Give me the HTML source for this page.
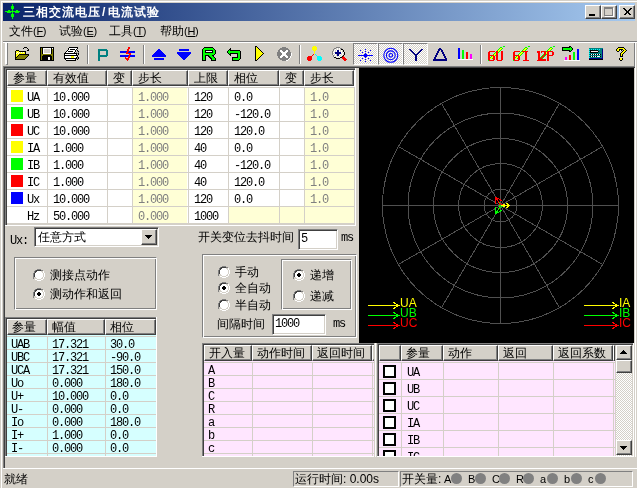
<!DOCTYPE html><html><head><meta charset="utf-8"><style>
*{margin:0;padding:0;box-sizing:border-box}
html,body{width:637px;height:488px;overflow:hidden}
body{background:#D4D0C8;position:relative;will-change:transform;font-family:"Liberation Sans",sans-serif;font-size:12px;color:#000}
.a{position:absolute}
.t{white-space:nowrap;font-size:12px;line-height:14px}
.m{white-space:nowrap;font-family:"Liberation Mono",monospace;font-size:12px;letter-spacing:-1.2px;line-height:14px}
svg{overflow:visible}
.mm{font-size:11px;letter-spacing:-0.3px}
</style></head><body>
<div class="a" style="left:1px;top:1px;width:636px;height:1px;background:#FFFFFF"></div>
<div class="a" style="left:1px;top:1px;width:1px;height:487px;background:#FFFFFF"></div>
<div class="a" style="left:3px;top:3px;width:632px;height:18px;background:linear-gradient(to right,#0A246A,#A6CAF0)"></div>
<svg class="a" style="left:2px;top:2px" width="18" height="17" viewBox="0 0 18 17" shape-rendering="crispEdges"><rect x="10" y="2" width="1" height="1" fill="#00FF00"/><rect x="10" y="3" width="1" height="1" fill="#00FF00"/><rect x="9" y="4" width="3" height="1" fill="#00FF00"/><rect x="9" y="5" width="3" height="1" fill="#00FF00"/><rect x="9" y="6" width="3" height="1" fill="#00FF00"/><rect x="10" y="7" width="1" height="1" fill="#00FF00"/><rect x="6" y="8" width="2" height="1" fill="#00FF00"/><rect x="10" y="8" width="1" height="1" fill="#00FF00"/><rect x="14" y="8" width="2" height="1" fill="#00FF00"/><rect x="3" y="9" width="15" height="1" fill="#00FF00"/><rect x="5" y="10" width="4" height="1" fill="#00FF00"/><rect x="10" y="10" width="1" height="1" fill="#00FF00"/><rect x="13" y="10" width="4" height="1" fill="#00FF00"/><rect x="10" y="11" width="1" height="1" fill="#00FF00"/><rect x="9" y="12" width="3" height="1" fill="#00FF00"/><rect x="9" y="13" width="3" height="1" fill="#00FF00"/><rect x="9" y="14" width="3" height="1" fill="#00FF00"/><rect x="10" y="15" width="1" height="1" fill="#00FF00"/><rect x="10" y="16" width="1" height="1" fill="#00FF00"/></svg>
<div class="a t" style="left:23px;top:5px;color:#fff;font-weight:bold;font-size:12px;line-height:14px;letter-spacing:1px">三相交流电压<span style="margin:0 2px 0 1px">/</span>电流试验</div>
<div class="a" style="left:585px;top:5px;width:16px;height:14px;background:#D4D0C8;border-top:1px solid #FFFFFF;border-left:1px solid #FFFFFF;border-right:1px solid #404040;border-bottom:1px solid #404040;box-shadow:inset -1px -1px 0 #808080"></div>
<div class="a" style="left:601px;top:5px;width:16px;height:14px;background:#D4D0C8;border-top:1px solid #FFFFFF;border-left:1px solid #FFFFFF;border-right:1px solid #404040;border-bottom:1px solid #404040;box-shadow:inset -1px -1px 0 #808080"></div>
<div class="a" style="left:619px;top:5px;width:16px;height:14px;background:#D4D0C8;border-top:1px solid #FFFFFF;border-left:1px solid #FFFFFF;border-right:1px solid #404040;border-bottom:1px solid #404040;box-shadow:inset -1px -1px 0 #808080"></div>
<div class="a" style="left:589px;top:14px;width:6px;height:2px;background:#000"></div>
<div class="a" style="left:604px;top:7px;width:9px;height:9px;border:1px solid #808080;border-top-width:2px;box-shadow:1px 1px 0 #FFFFFF"></div>
<svg class="a" style="left:619px;top:5px" width="16" height="14" viewBox="0 0 16 14"><path d="M4.5 3.5 L11.5 10.5 M5.5 3.5 L12.5 10.5 M11.5 3.5 L4.5 10.5 M12.5 3.5 L5.5 10.5" stroke="#000" stroke-width="1" shape-rendering="crispEdges"/></svg>
<div class="a t" style="left:9px;top:24px;font-size:12px;line-height:14px">文件<span class=mm>(<u>F</u>)</span></div>
<div class="a t" style="left:59px;top:24px;font-size:12px;line-height:14px">试验<span class=mm>(<u>E</u>)</span></div>
<div class="a t" style="left:109px;top:24px;font-size:12px;line-height:14px">工具<span class=mm>(<u>T</u>)</span></div>
<div class="a t" style="left:160px;top:24px;font-size:12px;line-height:14px">帮助<span class=mm>(<u>H</u>)</span></div>
<div class="a" style="left:3px;top:41px;width:634px;height:1px;background:#808080"></div>
<div class="a" style="left:3px;top:42px;width:634px;height:1px;background:#FFFFFF"></div>
<div class="a" style="left:5px;top:43px;width:3px;height:22px;border-left:2px solid #FFFFFF;border-right:1px solid #808080;border-bottom:1px solid #808080"></div>
<div class="a" style="left:87px;top:45px;width:1px;height:19px;background:#808080"></div>
<div class="a" style="left:88px;top:45px;width:1px;height:19px;background:#FFFFFF"></div>
<div class="a" style="left:143px;top:45px;width:1px;height:19px;background:#808080"></div>
<div class="a" style="left:144px;top:45px;width:1px;height:19px;background:#FFFFFF"></div>
<div class="a" style="left:299px;top:45px;width:1px;height:19px;background:#808080"></div>
<div class="a" style="left:300px;top:45px;width:1px;height:19px;background:#FFFFFF"></div>
<div class="a" style="left:480px;top:45px;width:1px;height:19px;background:#808080"></div>
<div class="a" style="left:481px;top:45px;width:1px;height:19px;background:#FFFFFF"></div>
<div class="a" style="left:353px;top:43px;width:25px;height:22px;border-top:1px solid #808080;border-left:1px solid #808080;border-right:1px solid #FFFFFF;border-bottom:1px solid #FFFFFF;background-color:#FFFFFF;background-image:repeating-conic-gradient(#D4D0C8 0 25%, #FFFFFF 0 50%);background-size:2px 2px"></div>
<div class="a" style="left:378px;top:43px;width:25px;height:22px;border-top:1px solid #808080;border-left:1px solid #808080;border-right:1px solid #FFFFFF;border-bottom:1px solid #FFFFFF;background-color:#FFFFFF;background-image:repeating-conic-gradient(#D4D0C8 0 25%, #FFFFFF 0 50%);background-size:2px 2px"></div>
<div class="a" style="left:403px;top:43px;width:25px;height:22px;border-top:1px solid #808080;border-left:1px solid #808080;border-right:1px solid #FFFFFF;border-bottom:1px solid #FFFFFF;background-color:#FFFFFF;background-image:repeating-conic-gradient(#D4D0C8 0 25%, #FFFFFF 0 50%);background-size:2px 2px"></div>
<div class="a" style="left:634px;top:43px;width:1px;height:23px;background:#808080"></div>
<div class="a" style="left:635px;top:43px;width:1px;height:23px;background:#FFFFFF"></div>
<svg class="a" style="left:13px;top:45px" width="16" height="15" viewBox="0 0 16 15" shape-rendering="crispEdges"><rect x="11" y="2" width="3" height="1" fill="#000000"/><rect x="10" y="3" width="1" height="1" fill="#000000"/><rect x="14" y="3" width="1" height="1" fill="#000000"/><rect x="15" y="4" width="1" height="1" fill="#000000"/><rect x="3" y="5" width="3" height="1" fill="#000000"/><rect x="14" y="5" width="2" height="1" fill="#000000"/><rect x="2" y="6" width="1" height="1" fill="#000000"/><rect x="3" y="6" width="3" height="1" fill="#FFFF00"/><rect x="6" y="6" width="7" height="1" fill="#000000"/><rect x="2" y="7" width="1" height="1" fill="#000000"/><rect x="3" y="7" width="1" height="1" fill="#FFFF00"/><rect x="4" y="7" width="1" height="1" fill="#FFFFFF"/><rect x="5" y="7" width="1" height="1" fill="#FFFF00"/><rect x="6" y="7" width="1" height="1" fill="#FFFFFF"/><rect x="7" y="7" width="1" height="1" fill="#FFFF00"/><rect x="8" y="7" width="1" height="1" fill="#FFFFFF"/><rect x="9" y="7" width="1" height="1" fill="#FFFF00"/><rect x="10" y="7" width="1" height="1" fill="#FFFFFF"/><rect x="11" y="7" width="1" height="1" fill="#FFFF00"/><rect x="12" y="7" width="1" height="1" fill="#000000"/><rect x="2" y="8" width="1" height="1" fill="#000000"/><rect x="3" y="8" width="1" height="1" fill="#FFFFFF"/><rect x="4" y="8" width="1" height="1" fill="#FFFF00"/><rect x="5" y="8" width="1" height="1" fill="#FFFFFF"/><rect x="6" y="8" width="6" height="1" fill="#FFFF00"/><rect x="12" y="8" width="1" height="1" fill="#000000"/><rect x="2" y="9" width="1" height="1" fill="#000000"/><rect x="3" y="9" width="3" height="1" fill="#FFFF00"/><rect x="6" y="9" width="10" height="1" fill="#000000"/><rect x="2" y="10" width="1" height="1" fill="#000000"/><rect x="3" y="10" width="2" height="1" fill="#FFFF00"/><rect x="5" y="10" width="1" height="1" fill="#000000"/><rect x="6" y="10" width="9" height="1" fill="#808000"/><rect x="15" y="10" width="1" height="1" fill="#000000"/><rect x="2" y="11" width="1" height="1" fill="#000000"/><rect x="3" y="11" width="1" height="1" fill="#FFFF00"/><rect x="4" y="11" width="1" height="1" fill="#000000"/><rect x="5" y="11" width="9" height="1" fill="#808000"/><rect x="14" y="11" width="1" height="1" fill="#000000"/><rect x="2" y="12" width="2" height="1" fill="#000000"/><rect x="4" y="12" width="9" height="1" fill="#808000"/><rect x="13" y="12" width="1" height="1" fill="#000000"/><rect x="2" y="13" width="1" height="1" fill="#000000"/><rect x="3" y="13" width="9" height="1" fill="#808000"/><rect x="12" y="13" width="1" height="1" fill="#000000"/><rect x="2" y="14" width="10" height="1" fill="#000000"/></svg>
<svg class="a" style="left:38px;top:45px" width="16" height="16" viewBox="0 0 16 16" shape-rendering="crispEdges"><rect x="2" y="2" width="14" height="1" fill="#000000"/><rect x="2" y="3" width="1" height="1" fill="#000000"/><rect x="3" y="3" width="1" height="1" fill="#808000"/><rect x="4" y="3" width="1" height="1" fill="#000000"/><rect x="5" y="3" width="8" height="1" fill="#FFFFFF"/><rect x="13" y="3" width="1" height="1" fill="#000000"/><rect x="14" y="3" width="1" height="1" fill="#FFFFFF"/><rect x="15" y="3" width="1" height="1" fill="#000000"/><rect x="2" y="4" width="1" height="1" fill="#000000"/><rect x="3" y="4" width="1" height="1" fill="#808000"/><rect x="4" y="4" width="1" height="1" fill="#000000"/><rect x="5" y="4" width="1" height="1" fill="#FFFFFF"/><rect x="6" y="4" width="6" height="1" fill="#D4D0C8"/><rect x="12" y="4" width="1" height="1" fill="#FFFFFF"/><rect x="13" y="4" width="1" height="1" fill="#000000"/><rect x="14" y="4" width="1" height="1" fill="#808000"/><rect x="15" y="4" width="1" height="1" fill="#000000"/><rect x="2" y="5" width="1" height="1" fill="#000000"/><rect x="3" y="5" width="1" height="1" fill="#808000"/><rect x="4" y="5" width="1" height="1" fill="#000000"/><rect x="5" y="5" width="1" height="1" fill="#FFFFFF"/><rect x="6" y="5" width="6" height="1" fill="#D4D0C8"/><rect x="12" y="5" width="1" height="1" fill="#FFFFFF"/><rect x="13" y="5" width="1" height="1" fill="#000000"/><rect x="14" y="5" width="1" height="1" fill="#808000"/><rect x="15" y="5" width="1" height="1" fill="#000000"/><rect x="2" y="6" width="1" height="1" fill="#000000"/><rect x="3" y="6" width="1" height="1" fill="#808000"/><rect x="4" y="6" width="1" height="1" fill="#000000"/><rect x="5" y="6" width="1" height="1" fill="#FFFFFF"/><rect x="6" y="6" width="6" height="1" fill="#D4D0C8"/><rect x="12" y="6" width="1" height="1" fill="#FFFFFF"/><rect x="13" y="6" width="1" height="1" fill="#000000"/><rect x="14" y="6" width="1" height="1" fill="#808000"/><rect x="15" y="6" width="1" height="1" fill="#000000"/><rect x="2" y="7" width="1" height="1" fill="#000000"/><rect x="3" y="7" width="1" height="1" fill="#808000"/><rect x="4" y="7" width="1" height="1" fill="#000000"/><rect x="5" y="7" width="1" height="1" fill="#FFFFFF"/><rect x="6" y="7" width="6" height="1" fill="#D4D0C8"/><rect x="12" y="7" width="1" height="1" fill="#FFFFFF"/><rect x="13" y="7" width="1" height="1" fill="#000000"/><rect x="14" y="7" width="1" height="1" fill="#808000"/><rect x="15" y="7" width="1" height="1" fill="#000000"/><rect x="2" y="8" width="1" height="1" fill="#000000"/><rect x="3" y="8" width="1" height="1" fill="#808000"/><rect x="4" y="8" width="1" height="1" fill="#000000"/><rect x="5" y="8" width="8" height="1" fill="#FFFFFF"/><rect x="13" y="8" width="1" height="1" fill="#000000"/><rect x="14" y="8" width="1" height="1" fill="#808000"/><rect x="15" y="8" width="1" height="1" fill="#000000"/><rect x="2" y="9" width="1" height="1" fill="#000000"/><rect x="3" y="9" width="12" height="1" fill="#808000"/><rect x="15" y="9" width="1" height="1" fill="#000000"/><rect x="2" y="10" width="1" height="1" fill="#000000"/><rect x="3" y="10" width="2" height="1" fill="#808000"/><rect x="5" y="10" width="8" height="1" fill="#000000"/><rect x="13" y="10" width="2" height="1" fill="#808000"/><rect x="15" y="10" width="1" height="1" fill="#000000"/><rect x="2" y="11" width="1" height="1" fill="#000000"/><rect x="3" y="11" width="1" height="1" fill="#808000"/><rect x="4" y="11" width="10" height="1" fill="#000000"/><rect x="14" y="11" width="1" height="1" fill="#808000"/><rect x="15" y="11" width="1" height="1" fill="#000000"/><rect x="2" y="12" width="1" height="1" fill="#000000"/><rect x="3" y="12" width="1" height="1" fill="#808000"/><rect x="4" y="12" width="6" height="1" fill="#000000"/><rect x="10" y="12" width="2" height="1" fill="#FFFFFF"/><rect x="12" y="12" width="2" height="1" fill="#000000"/><rect x="14" y="12" width="1" height="1" fill="#808000"/><rect x="15" y="12" width="1" height="1" fill="#000000"/><rect x="2" y="13" width="1" height="1" fill="#000000"/><rect x="3" y="13" width="1" height="1" fill="#808000"/><rect x="4" y="13" width="6" height="1" fill="#000000"/><rect x="10" y="13" width="2" height="1" fill="#FFFFFF"/><rect x="12" y="13" width="2" height="1" fill="#000000"/><rect x="14" y="13" width="1" height="1" fill="#808000"/><rect x="15" y="13" width="1" height="1" fill="#000000"/><rect x="2" y="14" width="1" height="1" fill="#000000"/><rect x="3" y="14" width="1" height="1" fill="#808000"/><rect x="4" y="14" width="6" height="1" fill="#000000"/><rect x="10" y="14" width="2" height="1" fill="#FFFFFF"/><rect x="12" y="14" width="2" height="1" fill="#000000"/><rect x="14" y="14" width="1" height="1" fill="#808000"/><rect x="15" y="14" width="1" height="1" fill="#000000"/><rect x="2" y="15" width="14" height="1" fill="#000000"/></svg>
<svg class="a" style="left:62px;top:45px" width="17" height="16" viewBox="0 0 17 16" shape-rendering="crispEdges"><rect x="7" y="2" width="9" height="1" fill="#000000"/><rect x="6" y="3" width="1" height="1" fill="#000000"/><rect x="7" y="3" width="8" height="1" fill="#FFFFFF"/><rect x="15" y="3" width="1" height="1" fill="#000000"/><rect x="6" y="4" width="1" height="1" fill="#000000"/><rect x="7" y="4" width="1" height="1" fill="#FFFFFF"/><rect x="8" y="4" width="5" height="1" fill="#000000"/><rect x="13" y="4" width="1" height="1" fill="#FFFFFF"/><rect x="14" y="4" width="1" height="1" fill="#000000"/><rect x="5" y="5" width="1" height="1" fill="#000000"/><rect x="6" y="5" width="7" height="1" fill="#FFFFFF"/><rect x="13" y="5" width="1" height="1" fill="#000000"/><rect x="15" y="5" width="1" height="1" fill="#000000"/><rect x="4" y="6" width="1" height="1" fill="#000000"/><rect x="5" y="6" width="1" height="1" fill="#FFFFFF"/><rect x="6" y="6" width="5" height="1" fill="#000000"/><rect x="11" y="6" width="2" height="1" fill="#FFFFFF"/><rect x="13" y="6" width="1" height="1" fill="#000000"/><rect x="15" y="6" width="1" height="1" fill="#808080"/><rect x="16" y="6" width="1" height="1" fill="#000000"/><rect x="3" y="7" width="1" height="1" fill="#000000"/><rect x="4" y="7" width="8" height="1" fill="#FFFFFF"/><rect x="12" y="7" width="1" height="1" fill="#000000"/><rect x="14" y="7" width="1" height="1" fill="#808080"/><rect x="16" y="7" width="1" height="1" fill="#808080"/><rect x="2" y="8" width="13" height="1" fill="#000000"/><rect x="15" y="8" width="1" height="1" fill="#808080"/><rect x="16" y="8" width="1" height="1" fill="#000000"/><rect x="2" y="9" width="1" height="1" fill="#000000"/><rect x="3" y="9" width="11" height="1" fill="#FFFFFF"/><rect x="14" y="9" width="1" height="1" fill="#000000"/><rect x="16" y="9" width="1" height="1" fill="#000000"/><rect x="2" y="10" width="14" height="1" fill="#000000"/><rect x="2" y="11" width="1" height="1" fill="#000000"/><rect x="3" y="11" width="6" height="1" fill="#FFFFFF"/><rect x="9" y="11" width="3" height="1" fill="#FFFF00"/><rect x="12" y="11" width="3" height="1" fill="#FFFFFF"/><rect x="15" y="11" width="1" height="1" fill="#000000"/><rect x="2" y="12" width="1" height="1" fill="#000000"/><rect x="3" y="12" width="6" height="1" fill="#FFFFFF"/><rect x="9" y="12" width="3" height="1" fill="#FFFF00"/><rect x="12" y="12" width="2" height="1" fill="#FFFFFF"/><rect x="14" y="12" width="1" height="1" fill="#000000"/><rect x="15" y="12" width="1" height="1" fill="#808080"/><rect x="16" y="12" width="1" height="1" fill="#000000"/><rect x="2" y="13" width="13" height="1" fill="#000000"/><rect x="15" y="13" width="1" height="1" fill="#808080"/><rect x="16" y="13" width="1" height="1" fill="#000000"/><rect x="3" y="14" width="1" height="1" fill="#000000"/><rect x="4" y="14" width="9" height="1" fill="#FFFFFF"/><rect x="13" y="14" width="1" height="1" fill="#000000"/><rect x="15" y="14" width="1" height="1" fill="#000000"/><rect x="4" y="15" width="10" height="1" fill="#000000"/></svg>
<svg class="a" style="left:94px;top:45px" width="14" height="16" viewBox="0 0 14 16" shape-rendering="crispEdges"><rect x="4" y="4" width="9" height="1" fill="#008080"/><rect x="4" y="5" width="10" height="1" fill="#008080"/><rect x="4" y="6" width="2" height="1" fill="#008080"/><rect x="12" y="6" width="2" height="1" fill="#008080"/><rect x="4" y="7" width="2" height="1" fill="#008080"/><rect x="12" y="7" width="2" height="1" fill="#008080"/><rect x="4" y="8" width="2" height="1" fill="#008080"/><rect x="12" y="8" width="2" height="1" fill="#008080"/><rect x="4" y="9" width="2" height="1" fill="#008080"/><rect x="12" y="9" width="2" height="1" fill="#008080"/><rect x="4" y="10" width="10" height="1" fill="#008080"/><rect x="4" y="11" width="9" height="1" fill="#008080"/><rect x="4" y="12" width="2" height="1" fill="#008080"/><rect x="4" y="13" width="2" height="1" fill="#008080"/><rect x="4" y="14" width="2" height="1" fill="#008080"/><rect x="4" y="15" width="2" height="1" fill="#008080"/></svg>
<svg class="a" style="left:118px;top:45px" width="17" height="16" viewBox="0 0 17 16" shape-rendering="crispEdges"><rect x="10" y="2" width="2" height="1" fill="#FF0000"/><rect x="10" y="3" width="2" height="1" fill="#FF0000"/><rect x="9" y="4" width="2" height="1" fill="#FF0000"/><rect x="9" y="5" width="2" height="1" fill="#FF0000"/><rect x="2" y="6" width="7" height="1" fill="#0000FF"/><rect x="9" y="6" width="2" height="1" fill="#FF0000"/><rect x="11" y="6" width="6" height="1" fill="#0000FF"/><rect x="2" y="7" width="6" height="1" fill="#0000FF"/><rect x="8" y="7" width="2" height="1" fill="#FF0000"/><rect x="10" y="7" width="7" height="1" fill="#0000FF"/><rect x="8" y="8" width="5" height="1" fill="#FF0000"/><rect x="11" y="9" width="2" height="1" fill="#FF0000"/><rect x="2" y="10" width="9" height="1" fill="#0000FF"/><rect x="11" y="10" width="1" height="1" fill="#FF0000"/><rect x="12" y="10" width="5" height="1" fill="#0000FF"/><rect x="2" y="11" width="8" height="1" fill="#0000FF"/><rect x="10" y="11" width="2" height="1" fill="#FF0000"/><rect x="12" y="11" width="5" height="1" fill="#0000FF"/><rect x="7" y="12" width="1" height="1" fill="#FF0000"/><rect x="10" y="12" width="2" height="1" fill="#FF0000"/><rect x="7" y="13" width="4" height="1" fill="#FF0000"/><rect x="8" y="14" width="3" height="1" fill="#FF0000"/><rect x="9" y="15" width="1" height="1" fill="#FF0000"/></svg>
<svg class="a" style="left:149px;top:45px" width="17" height="15" viewBox="0 0 17 15" shape-rendering="crispEdges"><rect x="9" y="4" width="2" height="1" fill="#0000FF"/><rect x="8" y="5" width="4" height="1" fill="#0000FF"/><rect x="7" y="6" width="6" height="1" fill="#0000FF"/><rect x="6" y="7" width="8" height="1" fill="#0000FF"/><rect x="5" y="8" width="10" height="1" fill="#0000FF"/><rect x="4" y="9" width="12" height="1" fill="#0000FF"/><rect x="3" y="10" width="14" height="1" fill="#0000FF"/><rect x="3" y="11" width="14" height="1" fill="#0000FF"/><rect x="5" y="13" width="10" height="1" fill="#0000FF"/><rect x="5" y="14" width="10" height="1" fill="#0000FF"/></svg>
<svg class="a" style="left:174px;top:45px" width="17" height="15" viewBox="0 0 17 15" shape-rendering="crispEdges"><rect x="5" y="4" width="10" height="1" fill="#0000FF"/><rect x="5" y="5" width="10" height="1" fill="#0000FF"/><rect x="3" y="7" width="14" height="1" fill="#0000FF"/><rect x="3" y="8" width="14" height="1" fill="#0000FF"/><rect x="4" y="9" width="12" height="1" fill="#0000FF"/><rect x="5" y="10" width="10" height="1" fill="#0000FF"/><rect x="6" y="11" width="8" height="1" fill="#0000FF"/><rect x="7" y="12" width="6" height="1" fill="#0000FF"/><rect x="8" y="13" width="4" height="1" fill="#0000FF"/><rect x="9" y="14" width="2" height="1" fill="#0000FF"/></svg>
<svg class="a" style="left:199px;top:45px" width="17" height="16" viewBox="0 0 17 16" shape-rendering="crispEdges"><rect x="5" y="2" width="9" height="1" fill="#000000"/><rect x="4" y="3" width="1" height="1" fill="#000000"/><rect x="5" y="3" width="9" height="1" fill="#00FF00"/><rect x="14" y="3" width="1" height="1" fill="#000000"/><rect x="3" y="4" width="1" height="1" fill="#000000"/><rect x="4" y="4" width="11" height="1" fill="#00FF00"/><rect x="15" y="4" width="1" height="1" fill="#000000"/><rect x="3" y="5" width="1" height="1" fill="#000000"/><rect x="4" y="5" width="2" height="1" fill="#00FF00"/><rect x="6" y="5" width="8" height="1" fill="#000000"/><rect x="14" y="5" width="2" height="1" fill="#00FF00"/><rect x="16" y="5" width="1" height="1" fill="#000000"/><rect x="3" y="6" width="1" height="1" fill="#000000"/><rect x="4" y="6" width="2" height="1" fill="#00FF00"/><rect x="6" y="6" width="1" height="1" fill="#000000"/><rect x="7" y="6" width="6" height="1" fill="#FFFFFF"/><rect x="13" y="6" width="1" height="1" fill="#000000"/><rect x="14" y="6" width="2" height="1" fill="#00FF00"/><rect x="16" y="6" width="1" height="1" fill="#000000"/><rect x="3" y="7" width="1" height="1" fill="#000000"/><rect x="4" y="7" width="2" height="1" fill="#00FF00"/><rect x="6" y="7" width="8" height="1" fill="#000000"/><rect x="14" y="7" width="2" height="1" fill="#00FF00"/><rect x="16" y="7" width="1" height="1" fill="#000000"/><rect x="3" y="8" width="1" height="1" fill="#000000"/><rect x="4" y="8" width="12" height="1" fill="#00FF00"/><rect x="16" y="8" width="1" height="1" fill="#000000"/><rect x="3" y="9" width="1" height="1" fill="#000000"/><rect x="4" y="9" width="11" height="1" fill="#00FF00"/><rect x="15" y="9" width="1" height="1" fill="#000000"/><rect x="3" y="10" width="1" height="1" fill="#000000"/><rect x="4" y="10" width="2" height="1" fill="#00FF00"/><rect x="6" y="10" width="4" height="1" fill="#000000"/><rect x="10" y="10" width="3" height="1" fill="#00FF00"/><rect x="13" y="10" width="2" height="1" fill="#000000"/><rect x="3" y="11" width="1" height="1" fill="#000000"/><rect x="4" y="11" width="2" height="1" fill="#00FF00"/><rect x="6" y="11" width="1" height="1" fill="#000000"/><rect x="9" y="11" width="2" height="1" fill="#000000"/><rect x="11" y="11" width="3" height="1" fill="#00FF00"/><rect x="14" y="11" width="1" height="1" fill="#000000"/><rect x="3" y="12" width="1" height="1" fill="#000000"/><rect x="4" y="12" width="2" height="1" fill="#00FF00"/><rect x="6" y="12" width="1" height="1" fill="#000000"/><rect x="10" y="12" width="2" height="1" fill="#000000"/><rect x="12" y="12" width="3" height="1" fill="#00FF00"/><rect x="15" y="12" width="1" height="1" fill="#000000"/><rect x="3" y="13" width="1" height="1" fill="#000000"/><rect x="4" y="13" width="2" height="1" fill="#00FF00"/><rect x="6" y="13" width="1" height="1" fill="#000000"/><rect x="11" y="13" width="2" height="1" fill="#000000"/><rect x="13" y="13" width="3" height="1" fill="#00FF00"/><rect x="16" y="13" width="1" height="1" fill="#000000"/><rect x="3" y="14" width="1" height="1" fill="#000000"/><rect x="4" y="14" width="2" height="1" fill="#00FF00"/><rect x="6" y="14" width="1" height="1" fill="#000000"/><rect x="12" y="14" width="1" height="1" fill="#000000"/><rect x="13" y="14" width="3" height="1" fill="#00FF00"/><rect x="16" y="14" width="1" height="1" fill="#000000"/><rect x="3" y="15" width="4" height="1" fill="#000000"/><rect x="12" y="15" width="5" height="1" fill="#000000"/></svg>
<svg class="a" style="left:224px;top:45px" width="17" height="16" viewBox="0 0 17 16" shape-rendering="crispEdges"><rect x="6" y="3" width="1" height="1" fill="#000000"/><rect x="5" y="4" width="2" height="1" fill="#000000"/><rect x="4" y="5" width="1" height="1" fill="#000000"/><rect x="5" y="5" width="1" height="1" fill="#00FF00"/><rect x="6" y="5" width="10" height="1" fill="#000000"/><rect x="3" y="6" width="1" height="1" fill="#000000"/><rect x="4" y="6" width="12" height="1" fill="#00FF00"/><rect x="16" y="6" width="1" height="1" fill="#000000"/><rect x="3" y="7" width="1" height="1" fill="#000000"/><rect x="4" y="7" width="12" height="1" fill="#00FF00"/><rect x="16" y="7" width="1" height="1" fill="#000000"/><rect x="4" y="8" width="1" height="1" fill="#000000"/><rect x="5" y="8" width="1" height="1" fill="#00FF00"/><rect x="6" y="8" width="8" height="1" fill="#000000"/><rect x="14" y="8" width="2" height="1" fill="#00FF00"/><rect x="16" y="8" width="1" height="1" fill="#000000"/><rect x="5" y="9" width="2" height="1" fill="#000000"/><rect x="13" y="9" width="1" height="1" fill="#000000"/><rect x="14" y="9" width="2" height="1" fill="#00FF00"/><rect x="16" y="9" width="1" height="1" fill="#000000"/><rect x="6" y="10" width="1" height="1" fill="#000000"/><rect x="13" y="10" width="1" height="1" fill="#000000"/><rect x="14" y="10" width="2" height="1" fill="#00FF00"/><rect x="16" y="10" width="1" height="1" fill="#000000"/><rect x="13" y="11" width="1" height="1" fill="#000000"/><rect x="14" y="11" width="2" height="1" fill="#00FF00"/><rect x="16" y="11" width="1" height="1" fill="#000000"/><rect x="8" y="12" width="6" height="1" fill="#000000"/><rect x="14" y="12" width="2" height="1" fill="#00FF00"/><rect x="16" y="12" width="1" height="1" fill="#000000"/><rect x="8" y="13" width="1" height="1" fill="#000000"/><rect x="9" y="13" width="7" height="1" fill="#00FF00"/><rect x="16" y="13" width="1" height="1" fill="#000000"/><rect x="8" y="14" width="1" height="1" fill="#000000"/><rect x="9" y="14" width="6" height="1" fill="#00FF00"/><rect x="15" y="14" width="1" height="1" fill="#000000"/><rect x="8" y="15" width="7" height="1" fill="#000000"/></svg>
<svg class="a" style="left:249px;top:45px" width="15" height="16" viewBox="0 0 15 16" shape-rendering="crispEdges"><rect x="6" y="1" width="2" height="1" fill="#000000"/><rect x="6" y="2" width="1" height="1" fill="#000000"/><rect x="7" y="2" width="1" height="1" fill="#FFFF00"/><rect x="8" y="2" width="1" height="1" fill="#000000"/><rect x="6" y="3" width="1" height="1" fill="#000000"/><rect x="7" y="3" width="2" height="1" fill="#FFFF00"/><rect x="9" y="3" width="1" height="1" fill="#000000"/><rect x="6" y="4" width="1" height="1" fill="#000000"/><rect x="7" y="4" width="3" height="1" fill="#FFFF00"/><rect x="10" y="4" width="1" height="1" fill="#000000"/><rect x="6" y="5" width="1" height="1" fill="#000000"/><rect x="7" y="5" width="4" height="1" fill="#FFFF00"/><rect x="11" y="5" width="1" height="1" fill="#000000"/><rect x="6" y="6" width="1" height="1" fill="#000000"/><rect x="7" y="6" width="5" height="1" fill="#FFFF00"/><rect x="12" y="6" width="1" height="1" fill="#000000"/><rect x="6" y="7" width="1" height="1" fill="#000000"/><rect x="7" y="7" width="6" height="1" fill="#FFFF00"/><rect x="13" y="7" width="1" height="1" fill="#000000"/><rect x="6" y="8" width="1" height="1" fill="#000000"/><rect x="7" y="8" width="7" height="1" fill="#FFFF00"/><rect x="14" y="8" width="1" height="1" fill="#000000"/><rect x="6" y="9" width="1" height="1" fill="#000000"/><rect x="7" y="9" width="6" height="1" fill="#FFFF00"/><rect x="13" y="9" width="1" height="1" fill="#000000"/><rect x="6" y="10" width="1" height="1" fill="#000000"/><rect x="7" y="10" width="5" height="1" fill="#FFFF00"/><rect x="12" y="10" width="1" height="1" fill="#000000"/><rect x="6" y="11" width="1" height="1" fill="#000000"/><rect x="7" y="11" width="4" height="1" fill="#FFFF00"/><rect x="11" y="11" width="1" height="1" fill="#000000"/><rect x="6" y="12" width="1" height="1" fill="#000000"/><rect x="7" y="12" width="3" height="1" fill="#FFFF00"/><rect x="10" y="12" width="1" height="1" fill="#000000"/><rect x="6" y="13" width="1" height="1" fill="#000000"/><rect x="7" y="13" width="2" height="1" fill="#FFFF00"/><rect x="9" y="13" width="1" height="1" fill="#000000"/><rect x="6" y="14" width="1" height="1" fill="#000000"/><rect x="7" y="14" width="1" height="1" fill="#FFFF00"/><rect x="8" y="14" width="1" height="1" fill="#000000"/><rect x="6" y="15" width="2" height="1" fill="#000000"/></svg>
<svg class="a" style="left:274px;top:45px" width="18" height="16" viewBox="0 0 18 16" shape-rendering="crispEdges"><rect x="8" y="2" width="4" height="1" fill="#808080"/><rect x="6" y="3" width="8" height="1" fill="#808080"/><rect x="5" y="4" width="10" height="1" fill="#808080"/><rect x="4" y="5" width="2" height="1" fill="#808080"/><rect x="6" y="5" width="2" height="1" fill="#FFFFFF"/><rect x="8" y="5" width="4" height="1" fill="#808080"/><rect x="12" y="5" width="2" height="1" fill="#FFFFFF"/><rect x="14" y="5" width="2" height="1" fill="#808080"/><rect x="4" y="6" width="2" height="1" fill="#808080"/><rect x="6" y="6" width="3" height="1" fill="#FFFFFF"/><rect x="9" y="6" width="2" height="1" fill="#808080"/><rect x="11" y="6" width="3" height="1" fill="#FFFFFF"/><rect x="14" y="6" width="2" height="1" fill="#808080"/><rect x="3" y="7" width="4" height="1" fill="#808080"/><rect x="7" y="7" width="6" height="1" fill="#FFFFFF"/><rect x="13" y="7" width="4" height="1" fill="#808080"/><rect x="3" y="8" width="5" height="1" fill="#808080"/><rect x="8" y="8" width="4" height="1" fill="#FFFFFF"/><rect x="12" y="8" width="5" height="1" fill="#808080"/><rect x="17" y="8" width="1" height="1" fill="#FFFFFF"/><rect x="3" y="9" width="5" height="1" fill="#808080"/><rect x="8" y="9" width="4" height="1" fill="#FFFFFF"/><rect x="12" y="9" width="5" height="1" fill="#808080"/><rect x="17" y="9" width="1" height="1" fill="#FFFFFF"/><rect x="3" y="10" width="4" height="1" fill="#808080"/><rect x="7" y="10" width="6" height="1" fill="#FFFFFF"/><rect x="13" y="10" width="4" height="1" fill="#808080"/><rect x="17" y="10" width="1" height="1" fill="#FFFFFF"/><rect x="4" y="11" width="2" height="1" fill="#808080"/><rect x="6" y="11" width="3" height="1" fill="#FFFFFF"/><rect x="9" y="11" width="2" height="1" fill="#808080"/><rect x="11" y="11" width="3" height="1" fill="#FFFFFF"/><rect x="14" y="11" width="2" height="1" fill="#808080"/><rect x="16" y="11" width="1" height="1" fill="#FFFFFF"/><rect x="4" y="12" width="2" height="1" fill="#808080"/><rect x="6" y="12" width="2" height="1" fill="#FFFFFF"/><rect x="8" y="12" width="4" height="1" fill="#808080"/><rect x="12" y="12" width="2" height="1" fill="#FFFFFF"/><rect x="14" y="12" width="2" height="1" fill="#808080"/><rect x="16" y="12" width="1" height="1" fill="#FFFFFF"/><rect x="5" y="13" width="10" height="1" fill="#808080"/><rect x="15" y="13" width="1" height="1" fill="#FFFFFF"/><rect x="6" y="14" width="8" height="1" fill="#808080"/><rect x="14" y="14" width="1" height="1" fill="#FFFFFF"/><rect x="8" y="15" width="4" height="1" fill="#808080"/><rect x="12" y="15" width="2" height="1" fill="#FFFFFF"/></svg>
<svg class="a" style="left:305px;top:45px" width="17" height="16" viewBox="0 0 17 16" shape-rendering="crispEdges"><rect x="8" y="1" width="3" height="1" fill="#FFFF00"/><rect x="7" y="2" width="5" height="1" fill="#FFFF00"/><rect x="7" y="3" width="5" height="1" fill="#FFFF00"/><rect x="7" y="4" width="5" height="1" fill="#FFFF00"/><rect x="8" y="5" width="3" height="1" fill="#FFFF00"/><rect x="9" y="6" width="1" height="1" fill="#FFFF00"/><rect x="9" y="7" width="1" height="1" fill="#FFFF00"/><rect x="9" y="8" width="1" height="1" fill="#FFFF00"/><rect x="8" y="9" width="1" height="1" fill="#FF0000"/><rect x="10" y="9" width="1" height="1" fill="#00FFFF"/><rect x="7" y="10" width="1" height="1" fill="#FF0000"/><rect x="11" y="10" width="1" height="1" fill="#00FFFF"/><rect x="3" y="11" width="4" height="1" fill="#FF0000"/><rect x="12" y="11" width="4" height="1" fill="#00FFFF"/><rect x="2" y="12" width="5" height="1" fill="#FF0000"/><rect x="12" y="12" width="5" height="1" fill="#00FFFF"/><rect x="2" y="13" width="5" height="1" fill="#FF0000"/><rect x="12" y="13" width="5" height="1" fill="#00FFFF"/><rect x="2" y="14" width="5" height="1" fill="#FF0000"/><rect x="12" y="14" width="5" height="1" fill="#00FFFF"/><rect x="3" y="15" width="3" height="1" fill="#FF0000"/><rect x="13" y="15" width="3" height="1" fill="#00FFFF"/></svg>
<svg class="a" style="left:330px;top:45px" width="17" height="16" viewBox="0 0 17 16" shape-rendering="crispEdges"><rect x="6" y="2" width="4" height="1" fill="#808080"/><rect x="4" y="3" width="2" height="1" fill="#808080"/><rect x="7" y="3" width="1" height="1" fill="#FFFFFF"/><rect x="9" y="3" width="1" height="1" fill="#FFFFFF"/><rect x="10" y="3" width="2" height="1" fill="#808080"/><rect x="3" y="4" width="1" height="1" fill="#808080"/><rect x="5" y="4" width="1" height="1" fill="#FFFFFF"/><rect x="7" y="4" width="1" height="1" fill="#FFFFFF"/><rect x="9" y="4" width="1" height="1" fill="#FFFFFF"/><rect x="11" y="4" width="2" height="1" fill="#000000"/><rect x="3" y="5" width="1" height="1" fill="#808080"/><rect x="4" y="5" width="1" height="1" fill="#FFFFFF"/><rect x="6" y="5" width="1" height="1" fill="#FFFFFF"/><rect x="7" y="5" width="2" height="1" fill="#000080"/><rect x="9" y="5" width="1" height="1" fill="#FFFFFF"/><rect x="11" y="5" width="1" height="1" fill="#FFFFFF"/><rect x="13" y="5" width="1" height="1" fill="#000000"/><rect x="2" y="6" width="1" height="1" fill="#808080"/><rect x="4" y="6" width="1" height="1" fill="#FFFFFF"/><rect x="6" y="6" width="1" height="1" fill="#FFFFFF"/><rect x="7" y="6" width="2" height="1" fill="#000080"/><rect x="9" y="6" width="1" height="1" fill="#FFFFFF"/><rect x="11" y="6" width="1" height="1" fill="#FFFFFF"/><rect x="13" y="6" width="1" height="1" fill="#000000"/><rect x="2" y="7" width="1" height="1" fill="#808080"/><rect x="3" y="7" width="1" height="1" fill="#FFFFFF"/><rect x="5" y="7" width="6" height="1" fill="#000080"/><rect x="11" y="7" width="1" height="1" fill="#FFFFFF"/><rect x="13" y="7" width="1" height="1" fill="#FFFFFF"/><rect x="14" y="7" width="1" height="1" fill="#000000"/><rect x="2" y="8" width="1" height="1" fill="#808080"/><rect x="4" y="8" width="1" height="1" fill="#FFFFFF"/><rect x="5" y="8" width="6" height="1" fill="#000080"/><rect x="12" y="8" width="1" height="1" fill="#FFFFFF"/><rect x="14" y="8" width="1" height="1" fill="#000000"/><rect x="2" y="9" width="1" height="1" fill="#808080"/><rect x="3" y="9" width="1" height="1" fill="#FFFFFF"/><rect x="5" y="9" width="1" height="1" fill="#FFFFFF"/><rect x="7" y="9" width="2" height="1" fill="#000080"/><rect x="10" y="9" width="1" height="1" fill="#FFFFFF"/><rect x="12" y="9" width="1" height="1" fill="#FFFFFF"/><rect x="14" y="9" width="1" height="1" fill="#000000"/><rect x="3" y="10" width="1" height="1" fill="#808080"/><rect x="5" y="10" width="1" height="1" fill="#FFFFFF"/><rect x="7" y="10" width="2" height="1" fill="#000080"/><rect x="9" y="10" width="1" height="1" fill="#FFFFFF"/><rect x="11" y="10" width="1" height="1" fill="#FFFFFF"/><rect x="13" y="10" width="1" height="1" fill="#000000"/><rect x="3" y="11" width="1" height="1" fill="#808080"/><rect x="4" y="11" width="1" height="1" fill="#FFFFFF"/><rect x="6" y="11" width="1" height="1" fill="#FFFFFF"/><rect x="8" y="11" width="1" height="1" fill="#FFFFFF"/><rect x="10" y="11" width="1" height="1" fill="#FFFFFF"/><rect x="12" y="11" width="1" height="1" fill="#000000"/><rect x="13" y="11" width="1" height="1" fill="#FF0000"/><rect x="4" y="12" width="2" height="1" fill="#000000"/><rect x="7" y="12" width="1" height="1" fill="#FFFFFF"/><rect x="9" y="12" width="1" height="1" fill="#FFFFFF"/><rect x="10" y="12" width="2" height="1" fill="#000000"/><rect x="12" y="12" width="3" height="1" fill="#FF0000"/><rect x="6" y="13" width="4" height="1" fill="#000000"/><rect x="12" y="13" width="4" height="1" fill="#FF0000"/><rect x="13" y="14" width="4" height="1" fill="#FF0000"/><rect x="14" y="15" width="2" height="1" fill="#FF0000"/></svg>
<svg class="a" style="left:355px;top:45px" width="18" height="17" viewBox="0 0 18 17" shape-rendering="crispEdges"><rect x="10" y="4" width="1" height="1" fill="#0000FF"/><rect x="5" y="5" width="1" height="1" fill="#0000FF"/><rect x="15" y="5" width="1" height="1" fill="#0000FF"/><rect x="10" y="6" width="1" height="1" fill="#0000FF"/><rect x="7" y="7" width="1" height="1" fill="#0000FF"/><rect x="13" y="7" width="1" height="1" fill="#0000FF"/><rect x="10" y="8" width="1" height="1" fill="#0000FF"/><rect x="9" y="9" width="3" height="1" fill="#0000FF"/><rect x="3" y="10" width="15" height="1" fill="#0000FF"/><rect x="9" y="11" width="3" height="1" fill="#0000FF"/><rect x="10" y="12" width="1" height="1" fill="#0000FF"/><rect x="7" y="13" width="1" height="1" fill="#0000FF"/><rect x="13" y="13" width="1" height="1" fill="#0000FF"/><rect x="10" y="14" width="1" height="1" fill="#0000FF"/><rect x="5" y="15" width="1" height="1" fill="#0000FF"/><rect x="15" y="15" width="1" height="1" fill="#0000FF"/><rect x="10" y="16" width="1" height="1" fill="#0000FF"/></svg>
<svg class="a" style="left:405px;top:45px" width="18" height="16" viewBox="0 0 18 16" shape-rendering="crispEdges"><rect x="4" y="4" width="2" height="1" fill="#000080"/><rect x="16" y="4" width="2" height="1" fill="#000080"/><rect x="5" y="5" width="2" height="1" fill="#000080"/><rect x="15" y="5" width="2" height="1" fill="#000080"/><rect x="6" y="6" width="2" height="1" fill="#000080"/><rect x="14" y="6" width="2" height="1" fill="#000080"/><rect x="7" y="7" width="2" height="1" fill="#000080"/><rect x="13" y="7" width="2" height="1" fill="#000080"/><rect x="8" y="8" width="2" height="1" fill="#000080"/><rect x="12" y="8" width="2" height="1" fill="#000080"/><rect x="9" y="9" width="4" height="1" fill="#000080"/><rect x="10" y="10" width="2" height="1" fill="#000080"/><rect x="10" y="11" width="2" height="1" fill="#000080"/><rect x="10" y="12" width="2" height="1" fill="#000080"/><rect x="10" y="13" width="2" height="1" fill="#000080"/><rect x="10" y="14" width="2" height="1" fill="#000080"/><rect x="10" y="15" width="2" height="1" fill="#000080"/></svg>
<svg class="a" style="left:430px;top:45px" width="17" height="16" viewBox="0 0 17 16" shape-rendering="crispEdges"><rect x="9" y="3" width="2" height="1" fill="#000080"/><rect x="8" y="4" width="4" height="1" fill="#000080"/><rect x="8" y="5" width="2" height="1" fill="#000080"/><rect x="11" y="5" width="2" height="1" fill="#000080"/><rect x="7" y="6" width="2" height="1" fill="#000080"/><rect x="11" y="6" width="2" height="1" fill="#000080"/><rect x="7" y="7" width="2" height="1" fill="#000080"/><rect x="12" y="7" width="2" height="1" fill="#000080"/><rect x="6" y="8" width="2" height="1" fill="#000080"/><rect x="12" y="8" width="2" height="1" fill="#000080"/><rect x="6" y="9" width="2" height="1" fill="#000080"/><rect x="13" y="9" width="2" height="1" fill="#000080"/><rect x="5" y="10" width="2" height="1" fill="#000080"/><rect x="13" y="10" width="2" height="1" fill="#000080"/><rect x="5" y="11" width="2" height="1" fill="#000080"/><rect x="14" y="11" width="2" height="1" fill="#000080"/><rect x="4" y="12" width="2" height="1" fill="#000080"/><rect x="14" y="12" width="2" height="1" fill="#000080"/><rect x="4" y="13" width="2" height="1" fill="#000080"/><rect x="15" y="13" width="2" height="1" fill="#000080"/><rect x="3" y="14" width="14" height="1" fill="#000080"/><rect x="3" y="15" width="14" height="1" fill="#000080"/></svg>
<svg class="a" style="left:560px;top:45px" width="13" height="7" viewBox="0 0 13 7" shape-rendering="crispEdges"><rect x="9" y="1" width="2" height="1" fill="#000000"/><rect x="2" y="2" width="8" height="1" fill="#000000"/><rect x="10" y="2" width="1" height="1" fill="#00FF00"/><rect x="11" y="2" width="1" height="1" fill="#000000"/><rect x="2" y="3" width="1" height="1" fill="#000000"/><rect x="3" y="3" width="9" height="1" fill="#00FF00"/><rect x="12" y="3" width="1" height="1" fill="#000000"/><rect x="2" y="4" width="1" height="1" fill="#000000"/><rect x="3" y="4" width="9" height="1" fill="#00FF00"/><rect x="12" y="4" width="1" height="1" fill="#000000"/><rect x="2" y="5" width="8" height="1" fill="#000000"/><rect x="10" y="5" width="1" height="1" fill="#00FF00"/><rect x="11" y="5" width="1" height="1" fill="#000000"/><rect x="9" y="6" width="2" height="1" fill="#000000"/></svg>
<svg class="a" style="left:560px;top:45px" width="20" height="16" viewBox="0 0 20 16" shape-rendering="crispEdges"><rect x="17" y="4" width="2" height="1" fill="#0000FF"/><rect x="17" y="5" width="2" height="1" fill="#0000FF"/><rect x="17" y="6" width="2" height="1" fill="#0000FF"/><rect x="13" y="7" width="2" height="1" fill="#00FF00"/><rect x="17" y="7" width="2" height="1" fill="#0000FF"/><rect x="13" y="8" width="2" height="1" fill="#00FF00"/><rect x="17" y="8" width="2" height="1" fill="#0000FF"/><rect x="13" y="9" width="2" height="1" fill="#00FF00"/><rect x="17" y="9" width="2" height="1" fill="#0000FF"/><rect x="9" y="10" width="2" height="1" fill="#FF0000"/><rect x="13" y="10" width="2" height="1" fill="#00FF00"/><rect x="17" y="10" width="2" height="1" fill="#0000FF"/><rect x="9" y="11" width="2" height="1" fill="#FF0000"/><rect x="13" y="11" width="2" height="1" fill="#00FF00"/><rect x="17" y="11" width="2" height="1" fill="#0000FF"/><rect x="5" y="12" width="2" height="1" fill="#FF00FF"/><rect x="9" y="12" width="2" height="1" fill="#FF0000"/><rect x="13" y="12" width="2" height="1" fill="#00FF00"/><rect x="17" y="12" width="2" height="1" fill="#0000FF"/><rect x="5" y="13" width="2" height="1" fill="#FF00FF"/><rect x="9" y="13" width="2" height="1" fill="#FF0000"/><rect x="13" y="13" width="2" height="1" fill="#00FF00"/><rect x="17" y="13" width="2" height="1" fill="#0000FF"/><rect x="5" y="14" width="2" height="1" fill="#FF00FF"/><rect x="9" y="14" width="2" height="1" fill="#FF0000"/><rect x="13" y="14" width="2" height="1" fill="#00FF00"/><rect x="17" y="14" width="2" height="1" fill="#0000FF"/><rect x="4" y="15" width="16" height="1" fill="#FFFFFF"/></svg>
<svg class="a" style="left:587px;top:45px" width="16" height="15" viewBox="0 0 16 15" shape-rendering="crispEdges"><rect x="2" y="3" width="14" height="1" fill="#008080"/><rect x="2" y="4" width="1" height="1" fill="#00FFFF"/><rect x="3" y="4" width="1" height="1" fill="#008080"/><rect x="4" y="4" width="1" height="1" fill="#00FFFF"/><rect x="5" y="4" width="1" height="1" fill="#008080"/><rect x="6" y="4" width="1" height="1" fill="#00FFFF"/><rect x="7" y="4" width="1" height="1" fill="#008080"/><rect x="8" y="4" width="1" height="1" fill="#00FFFF"/><rect x="9" y="4" width="1" height="1" fill="#008080"/><rect x="10" y="4" width="1" height="1" fill="#00FFFF"/><rect x="11" y="4" width="1" height="1" fill="#008080"/><rect x="12" y="4" width="1" height="1" fill="#00FFFF"/><rect x="13" y="4" width="2" height="1" fill="#008080"/><rect x="15" y="4" width="1" height="1" fill="#000080"/><rect x="2" y="5" width="1" height="1" fill="#008080"/><rect x="3" y="5" width="8" height="1" fill="#000000"/><rect x="11" y="5" width="4" height="1" fill="#008080"/><rect x="15" y="5" width="1" height="1" fill="#000080"/><rect x="2" y="6" width="1" height="1" fill="#00FFFF"/><rect x="3" y="6" width="1" height="1" fill="#000000"/><rect x="4" y="6" width="7" height="1" fill="#FFF0F0"/><rect x="11" y="6" width="1" height="1" fill="#000000"/><rect x="12" y="6" width="3" height="1" fill="#008080"/><rect x="15" y="6" width="1" height="1" fill="#000080"/><rect x="2" y="7" width="1" height="1" fill="#008080"/><rect x="3" y="7" width="8" height="1" fill="#000000"/><rect x="11" y="7" width="4" height="1" fill="#008080"/><rect x="15" y="7" width="1" height="1" fill="#000080"/><rect x="2" y="8" width="1" height="1" fill="#00FFFF"/><rect x="3" y="8" width="12" height="1" fill="#008080"/><rect x="15" y="8" width="1" height="1" fill="#000080"/><rect x="2" y="9" width="1" height="1" fill="#008080"/><rect x="3" y="9" width="1" height="1" fill="#000000"/><rect x="4" y="9" width="1" height="1" fill="#FFFFFF"/><rect x="5" y="9" width="1" height="1" fill="#000000"/><rect x="6" y="9" width="1" height="1" fill="#FFFFFF"/><rect x="7" y="9" width="1" height="1" fill="#000000"/><rect x="8" y="9" width="1" height="1" fill="#FFFFFF"/><rect x="9" y="9" width="1" height="1" fill="#000000"/><rect x="10" y="9" width="1" height="1" fill="#FFFFFF"/><rect x="11" y="9" width="1" height="1" fill="#000000"/><rect x="12" y="9" width="1" height="1" fill="#FFFFFF"/><rect x="13" y="9" width="1" height="1" fill="#000000"/><rect x="14" y="9" width="1" height="1" fill="#008080"/><rect x="15" y="9" width="1" height="1" fill="#000080"/><rect x="2" y="10" width="1" height="1" fill="#00FFFF"/><rect x="3" y="10" width="12" height="1" fill="#008080"/><rect x="15" y="10" width="1" height="1" fill="#000080"/><rect x="2" y="11" width="1" height="1" fill="#008080"/><rect x="3" y="11" width="1" height="1" fill="#000000"/><rect x="4" y="11" width="1" height="1" fill="#FFFFFF"/><rect x="5" y="11" width="1" height="1" fill="#000000"/><rect x="6" y="11" width="1" height="1" fill="#FFFFFF"/><rect x="7" y="11" width="1" height="1" fill="#000000"/><rect x="8" y="11" width="1" height="1" fill="#FFFFFF"/><rect x="9" y="11" width="1" height="1" fill="#000000"/><rect x="10" y="11" width="3" height="1" fill="#FFFFFF"/><rect x="13" y="11" width="1" height="1" fill="#000000"/><rect x="14" y="11" width="1" height="1" fill="#008080"/><rect x="15" y="11" width="1" height="1" fill="#000080"/><rect x="2" y="12" width="1" height="1" fill="#00FFFF"/><rect x="3" y="12" width="12" height="1" fill="#008080"/><rect x="15" y="12" width="1" height="1" fill="#000080"/><rect x="2" y="13" width="14" height="1" fill="#000080"/><rect x="2" y="14" width="14" height="1" fill="#000000"/></svg>
<svg class="a" style="left:612px;top:45px" width="15" height="16" viewBox="0 0 15 16" shape-rendering="crispEdges"><rect x="6" y="2" width="6" height="1" fill="#000000"/><rect x="5" y="3" width="1" height="1" fill="#000000"/><rect x="6" y="3" width="6" height="1" fill="#FFFF00"/><rect x="12" y="3" width="1" height="1" fill="#000000"/><rect x="4" y="4" width="1" height="1" fill="#000000"/><rect x="5" y="4" width="2" height="1" fill="#FFFF00"/><rect x="7" y="4" width="4" height="1" fill="#000000"/><rect x="11" y="4" width="2" height="1" fill="#FFFF00"/><rect x="13" y="4" width="1" height="1" fill="#000000"/><rect x="4" y="5" width="1" height="1" fill="#000000"/><rect x="5" y="5" width="2" height="1" fill="#FFFF00"/><rect x="7" y="5" width="1" height="1" fill="#000000"/><rect x="8" y="5" width="1" height="1" fill="#FFFFFF"/><rect x="9" y="5" width="1" height="1" fill="#000000"/><rect x="11" y="5" width="1" height="1" fill="#000000"/><rect x="12" y="5" width="2" height="1" fill="#FFFF00"/><rect x="14" y="5" width="1" height="1" fill="#000000"/><rect x="5" y="6" width="2" height="1" fill="#000000"/><rect x="10" y="6" width="1" height="1" fill="#000000"/><rect x="11" y="6" width="2" height="1" fill="#FFFF00"/><rect x="13" y="6" width="1" height="1" fill="#000000"/><rect x="9" y="7" width="1" height="1" fill="#000000"/><rect x="10" y="7" width="2" height="1" fill="#FFFF00"/><rect x="12" y="7" width="1" height="1" fill="#000000"/><rect x="8" y="8" width="1" height="1" fill="#000000"/><rect x="9" y="8" width="2" height="1" fill="#FFFF00"/><rect x="11" y="8" width="1" height="1" fill="#000000"/><rect x="8" y="9" width="1" height="1" fill="#000000"/><rect x="9" y="9" width="1" height="1" fill="#FFFF00"/><rect x="10" y="9" width="1" height="1" fill="#000000"/><rect x="8" y="10" width="1" height="1" fill="#000000"/><rect x="9" y="10" width="1" height="1" fill="#FFFF00"/><rect x="10" y="10" width="1" height="1" fill="#000000"/><rect x="8" y="11" width="3" height="1" fill="#000000"/><rect x="7" y="13" width="1" height="1" fill="#000000"/><rect x="8" y="13" width="2" height="1" fill="#FFFF00"/><rect x="10" y="13" width="1" height="1" fill="#000000"/><rect x="7" y="14" width="1" height="1" fill="#000000"/><rect x="8" y="14" width="2" height="1" fill="#FFFF00"/><rect x="10" y="14" width="1" height="1" fill="#000000"/><rect x="8" y="15" width="2" height="1" fill="#000000"/></svg>
<svg class="a" style="left:486px;top:45px" width="19" height="16" viewBox="0 0 19 16" shape-rendering="crispEdges"><rect x="2" y="15" width="2" height="1" fill="#00FF00"/><rect x="2" y="14" width="2" height="1" fill="#00FF00"/><rect x="3" y="13" width="1" height="1" fill="#00FF00"/><rect x="4" y="13" width="2" height="1" fill="#FFFF00"/><rect x="6" y="13" width="1" height="1" fill="#00FF00"/><rect x="4" y="12" width="1" height="1" fill="#00FF00"/><rect x="5" y="12" width="2" height="1" fill="#FFFF00"/><rect x="7" y="12" width="1" height="1" fill="#00FF00"/><rect x="5" y="11" width="1" height="1" fill="#00FF00"/><rect x="6" y="11" width="2" height="1" fill="#FFFF00"/><rect x="8" y="11" width="1" height="1" fill="#00FF00"/><rect x="6" y="10" width="1" height="1" fill="#00FF00"/><rect x="7" y="10" width="2" height="1" fill="#FFFF00"/><rect x="9" y="10" width="1" height="1" fill="#00FF00"/><rect x="7" y="9" width="1" height="1" fill="#00FF00"/><rect x="8" y="9" width="2" height="1" fill="#FFFF00"/><rect x="10" y="9" width="1" height="1" fill="#00FF00"/><rect x="8" y="8" width="1" height="1" fill="#00FF00"/><rect x="9" y="8" width="2" height="1" fill="#FFFF00"/><rect x="11" y="8" width="1" height="1" fill="#00FF00"/><rect x="9" y="7" width="1" height="1" fill="#00FF00"/><rect x="10" y="7" width="2" height="1" fill="#FFFF00"/><rect x="12" y="7" width="1" height="1" fill="#00FF00"/><rect x="10" y="6" width="1" height="1" fill="#00FF00"/><rect x="11" y="6" width="2" height="1" fill="#FFFF00"/><rect x="13" y="6" width="1" height="1" fill="#00FF00"/><rect x="11" y="5" width="1" height="1" fill="#00FF00"/><rect x="12" y="5" width="2" height="1" fill="#FFFF00"/><rect x="14" y="5" width="1" height="1" fill="#00FF00"/><rect x="12" y="4" width="1" height="1" fill="#00FF00"/><rect x="13" y="4" width="2" height="1" fill="#FFFF00"/><rect x="15" y="4" width="1" height="1" fill="#00FF00"/><rect x="13" y="3" width="1" height="1" fill="#00FF00"/><rect x="14" y="3" width="2" height="1" fill="#FFFF00"/><rect x="16" y="3" width="1" height="1" fill="#00FF00"/><rect x="14" y="2" width="2" height="1" fill="#00FF00"/><rect x="17" y="1" width="2" height="1" fill="#00FF00"/></svg>
<svg class="a" style="left:511px;top:45px" width="19" height="16" viewBox="0 0 19 16" shape-rendering="crispEdges"><rect x="2" y="15" width="2" height="1" fill="#00FF00"/><rect x="2" y="14" width="2" height="1" fill="#00FF00"/><rect x="3" y="13" width="1" height="1" fill="#00FF00"/><rect x="4" y="13" width="2" height="1" fill="#FFFF00"/><rect x="6" y="13" width="1" height="1" fill="#00FF00"/><rect x="4" y="12" width="1" height="1" fill="#00FF00"/><rect x="5" y="12" width="2" height="1" fill="#FFFF00"/><rect x="7" y="12" width="1" height="1" fill="#00FF00"/><rect x="5" y="11" width="1" height="1" fill="#00FF00"/><rect x="6" y="11" width="2" height="1" fill="#FFFF00"/><rect x="8" y="11" width="1" height="1" fill="#00FF00"/><rect x="6" y="10" width="1" height="1" fill="#00FF00"/><rect x="7" y="10" width="2" height="1" fill="#FFFF00"/><rect x="9" y="10" width="1" height="1" fill="#00FF00"/><rect x="7" y="9" width="1" height="1" fill="#00FF00"/><rect x="8" y="9" width="2" height="1" fill="#FFFF00"/><rect x="10" y="9" width="1" height="1" fill="#00FF00"/><rect x="8" y="8" width="1" height="1" fill="#00FF00"/><rect x="9" y="8" width="2" height="1" fill="#FFFF00"/><rect x="11" y="8" width="1" height="1" fill="#00FF00"/><rect x="9" y="7" width="1" height="1" fill="#00FF00"/><rect x="10" y="7" width="2" height="1" fill="#FFFF00"/><rect x="12" y="7" width="1" height="1" fill="#00FF00"/><rect x="10" y="6" width="1" height="1" fill="#00FF00"/><rect x="11" y="6" width="2" height="1" fill="#FFFF00"/><rect x="13" y="6" width="1" height="1" fill="#00FF00"/><rect x="11" y="5" width="1" height="1" fill="#00FF00"/><rect x="12" y="5" width="2" height="1" fill="#FFFF00"/><rect x="14" y="5" width="1" height="1" fill="#00FF00"/><rect x="12" y="4" width="1" height="1" fill="#00FF00"/><rect x="13" y="4" width="2" height="1" fill="#FFFF00"/><rect x="15" y="4" width="1" height="1" fill="#00FF00"/><rect x="13" y="3" width="1" height="1" fill="#00FF00"/><rect x="14" y="3" width="2" height="1" fill="#FFFF00"/><rect x="16" y="3" width="1" height="1" fill="#00FF00"/><rect x="14" y="2" width="2" height="1" fill="#00FF00"/><rect x="17" y="1" width="2" height="1" fill="#00FF00"/></svg>
<svg class="a" style="left:535px;top:45px" width="20" height="16" viewBox="0 0 20 16" shape-rendering="crispEdges"><rect x="3" y="15" width="2" height="1" fill="#00FF00"/><rect x="3" y="14" width="2" height="1" fill="#00FF00"/><rect x="4" y="13" width="1" height="1" fill="#00FF00"/><rect x="5" y="13" width="2" height="1" fill="#FFFF00"/><rect x="7" y="13" width="1" height="1" fill="#00FF00"/><rect x="5" y="12" width="1" height="1" fill="#00FF00"/><rect x="6" y="12" width="2" height="1" fill="#FFFF00"/><rect x="8" y="12" width="1" height="1" fill="#00FF00"/><rect x="6" y="11" width="1" height="1" fill="#00FF00"/><rect x="7" y="11" width="2" height="1" fill="#FFFF00"/><rect x="9" y="11" width="1" height="1" fill="#00FF00"/><rect x="7" y="10" width="1" height="1" fill="#00FF00"/><rect x="8" y="10" width="2" height="1" fill="#FFFF00"/><rect x="10" y="10" width="1" height="1" fill="#00FF00"/><rect x="8" y="9" width="1" height="1" fill="#00FF00"/><rect x="9" y="9" width="2" height="1" fill="#FFFF00"/><rect x="11" y="9" width="1" height="1" fill="#00FF00"/><rect x="9" y="8" width="1" height="1" fill="#00FF00"/><rect x="10" y="8" width="2" height="1" fill="#FFFF00"/><rect x="12" y="8" width="1" height="1" fill="#00FF00"/><rect x="10" y="7" width="1" height="1" fill="#00FF00"/><rect x="11" y="7" width="2" height="1" fill="#FFFF00"/><rect x="13" y="7" width="1" height="1" fill="#00FF00"/><rect x="11" y="6" width="1" height="1" fill="#00FF00"/><rect x="12" y="6" width="2" height="1" fill="#FFFF00"/><rect x="14" y="6" width="1" height="1" fill="#00FF00"/><rect x="12" y="5" width="1" height="1" fill="#00FF00"/><rect x="13" y="5" width="2" height="1" fill="#FFFF00"/><rect x="15" y="5" width="1" height="1" fill="#00FF00"/><rect x="13" y="4" width="1" height="1" fill="#00FF00"/><rect x="14" y="4" width="2" height="1" fill="#FFFF00"/><rect x="16" y="4" width="1" height="1" fill="#00FF00"/><rect x="14" y="3" width="1" height="1" fill="#00FF00"/><rect x="15" y="3" width="2" height="1" fill="#FFFF00"/><rect x="17" y="3" width="1" height="1" fill="#00FF00"/><rect x="15" y="2" width="2" height="1" fill="#00FF00"/><rect x="18" y="1" width="2" height="1" fill="#00FF00"/></svg>
<svg class="a" style="left:486px;top:45px" width="17" height="16" viewBox="0 0 17 16" shape-rendering="crispEdges"><rect x="3" y="6" width="6" height="1" fill="#FF0000"/><rect x="10" y="6" width="2" height="1" fill="#FF0000"/><rect x="15" y="6" width="2" height="1" fill="#FF0000"/><rect x="2" y="7" width="2" height="1" fill="#FF0000"/><rect x="10" y="7" width="2" height="1" fill="#FF0000"/><rect x="15" y="7" width="2" height="1" fill="#FF0000"/><rect x="2" y="8" width="2" height="1" fill="#FF0000"/><rect x="10" y="8" width="2" height="1" fill="#FF0000"/><rect x="15" y="8" width="2" height="1" fill="#FF0000"/><rect x="2" y="9" width="2" height="1" fill="#FF0000"/><rect x="10" y="9" width="2" height="1" fill="#FF0000"/><rect x="15" y="9" width="2" height="1" fill="#FF0000"/><rect x="2" y="10" width="6" height="1" fill="#FF0000"/><rect x="10" y="10" width="2" height="1" fill="#FF0000"/><rect x="15" y="10" width="2" height="1" fill="#FF0000"/><rect x="2" y="11" width="2" height="1" fill="#FF0000"/><rect x="7" y="11" width="2" height="1" fill="#FF0000"/><rect x="10" y="11" width="2" height="1" fill="#FF0000"/><rect x="15" y="11" width="2" height="1" fill="#FF0000"/><rect x="2" y="12" width="2" height="1" fill="#FF0000"/><rect x="7" y="12" width="2" height="1" fill="#FF0000"/><rect x="10" y="12" width="2" height="1" fill="#FF0000"/><rect x="15" y="12" width="2" height="1" fill="#FF0000"/><rect x="2" y="13" width="2" height="1" fill="#FF0000"/><rect x="7" y="13" width="2" height="1" fill="#FF0000"/><rect x="10" y="13" width="2" height="1" fill="#FF0000"/><rect x="15" y="13" width="2" height="1" fill="#FF0000"/><rect x="2" y="14" width="2" height="1" fill="#FF0000"/><rect x="7" y="14" width="2" height="1" fill="#FF0000"/><rect x="10" y="14" width="2" height="1" fill="#FF0000"/><rect x="15" y="14" width="2" height="1" fill="#FF0000"/><rect x="3" y="15" width="5" height="1" fill="#FF0000"/><rect x="11" y="15" width="5" height="1" fill="#FF0000"/></svg>
<svg class="a" style="left:511px;top:45px" width="18" height="16" viewBox="0 0 18 16" shape-rendering="crispEdges"><rect x="3" y="6" width="6" height="1" fill="#FF0000"/><rect x="11" y="6" width="6" height="1" fill="#FF0000"/><rect x="2" y="7" width="2" height="1" fill="#FF0000"/><rect x="14" y="7" width="2" height="1" fill="#FF0000"/><rect x="2" y="8" width="2" height="1" fill="#FF0000"/><rect x="14" y="8" width="2" height="1" fill="#FF0000"/><rect x="2" y="9" width="2" height="1" fill="#FF0000"/><rect x="14" y="9" width="2" height="1" fill="#FF0000"/><rect x="2" y="10" width="6" height="1" fill="#FF0000"/><rect x="14" y="10" width="2" height="1" fill="#FF0000"/><rect x="2" y="11" width="2" height="1" fill="#FF0000"/><rect x="7" y="11" width="2" height="1" fill="#FF0000"/><rect x="14" y="11" width="2" height="1" fill="#FF0000"/><rect x="2" y="12" width="2" height="1" fill="#FF0000"/><rect x="7" y="12" width="2" height="1" fill="#FF0000"/><rect x="14" y="12" width="2" height="1" fill="#FF0000"/><rect x="2" y="13" width="2" height="1" fill="#FF0000"/><rect x="7" y="13" width="2" height="1" fill="#FF0000"/><rect x="14" y="13" width="2" height="1" fill="#FF0000"/><rect x="2" y="14" width="2" height="1" fill="#FF0000"/><rect x="7" y="14" width="2" height="1" fill="#FF0000"/><rect x="14" y="14" width="2" height="1" fill="#FF0000"/><rect x="3" y="15" width="5" height="1" fill="#FF0000"/><rect x="12" y="15" width="6" height="1" fill="#FF0000"/></svg>
<svg class="a" style="left:535px;top:45px" width="19" height="16" viewBox="0 0 19 16" shape-rendering="crispEdges"><rect x="2" y="6" width="3" height="1" fill="#FF0000"/><rect x="6" y="6" width="5" height="1" fill="#FF0000"/><rect x="12" y="6" width="6" height="1" fill="#FF0000"/><rect x="2" y="7" width="3" height="1" fill="#FF0000"/><rect x="6" y="7" width="1" height="1" fill="#FF0000"/><rect x="9" y="7" width="2" height="1" fill="#FF0000"/><rect x="12" y="7" width="2" height="1" fill="#FF0000"/><rect x="17" y="7" width="2" height="1" fill="#FF0000"/><rect x="3" y="8" width="2" height="1" fill="#FF0000"/><rect x="9" y="8" width="2" height="1" fill="#FF0000"/><rect x="12" y="8" width="2" height="1" fill="#FF0000"/><rect x="17" y="8" width="2" height="1" fill="#FF0000"/><rect x="3" y="9" width="2" height="1" fill="#FF0000"/><rect x="9" y="9" width="2" height="1" fill="#FF0000"/><rect x="12" y="9" width="2" height="1" fill="#FF0000"/><rect x="17" y="9" width="2" height="1" fill="#FF0000"/><rect x="3" y="10" width="2" height="1" fill="#FF0000"/><rect x="8" y="10" width="2" height="1" fill="#FF0000"/><rect x="12" y="10" width="6" height="1" fill="#FF0000"/><rect x="3" y="11" width="2" height="1" fill="#FF0000"/><rect x="7" y="11" width="2" height="1" fill="#FF0000"/><rect x="12" y="11" width="2" height="1" fill="#FF0000"/><rect x="3" y="12" width="2" height="1" fill="#FF0000"/><rect x="6" y="12" width="2" height="1" fill="#FF0000"/><rect x="12" y="12" width="2" height="1" fill="#FF0000"/><rect x="3" y="13" width="4" height="1" fill="#FF0000"/><rect x="12" y="13" width="2" height="1" fill="#FF0000"/><rect x="3" y="14" width="8" height="1" fill="#FF0000"/><rect x="12" y="14" width="2" height="1" fill="#FF0000"/><rect x="2" y="15" width="9" height="1" fill="#FF0000"/><rect x="12" y="15" width="2" height="1" fill="#FF0000"/></svg>
<svg class="a" style="left:380px;top:45px;" width="18" height="18" viewBox="0 0 18 18" shape-rendering="crispEdges">
<g fill="none" stroke="#0000FF" stroke-width="1.1" shape-rendering="auto">
<circle cx="10.8" cy="10.3" r="7"/><circle cx="10.8" cy="10.3" r="4.4"/><circle cx="10.8" cy="10.3" r="1.8"/>
</g></svg>
<svg class="a" style="left:457px;top:45px;" width="16" height="16" viewBox="0 0 16 16" shape-rendering="crispEdges">
<rect x="1" y="3" width="2" height="11" fill="#0000FF"/>
<rect x="5" y="5" width="2" height="9" fill="#00FF00"/>
<rect x="9" y="7" width="2" height="7" fill="#FF0000"/>
<rect x="13" y="9" width="2" height="5" fill="#FF00FF"/>
<rect x="1" y="14" width="15" height="1" fill="#fff"/>
</svg>
<div class="a" style="left:3px;top:66px;width:1px;height:402px;background:#808080"></div>
<div class="a" style="left:4px;top:67px;width:1px;height:401px;background:#404040"></div>
<div class="a" style="left:3px;top:66px;width:633px;height:1px;background:#808080"></div>
<div class="a" style="left:4px;top:67px;width:631px;height:1px;background:#404040"></div>
<div class="a" style="left:635px;top:66px;width:1px;height:403px;background:#FFFFFF"></div>
<div class="a" style="left:3px;top:468px;width:634px;height:1px;background:#FFFFFF"></div>
<div class="a" style="left:7px;top:70px;width:348px;height:154px;background:#fff"></div>
<div class="a" style="left:7px;top:70px;width:40px;height:16px;background:#D4D0C8;border-top:1px solid #FFFFFF;border-left:1px solid #FFFFFF;border-right:1px solid #404040;border-bottom:1px solid #404040;box-shadow:inset -1px -1px 0 #808080"></div>
<div class="a t" style="left:13px;top:71px">参量</div>
<div class="a" style="left:47px;top:70px;width:60px;height:16px;background:#D4D0C8;border-top:1px solid #FFFFFF;border-left:1px solid #FFFFFF;border-right:1px solid #404040;border-bottom:1px solid #404040;box-shadow:inset -1px -1px 0 #808080"></div>
<div class="a t" style="left:53px;top:71px">有效值</div>
<div class="a" style="left:107px;top:70px;width:25px;height:16px;background:#D4D0C8;border-top:1px solid #FFFFFF;border-left:1px solid #FFFFFF;border-right:1px solid #404040;border-bottom:1px solid #404040;box-shadow:inset -1px -1px 0 #808080"></div>
<div class="a t" style="left:113px;top:71px">变</div>
<div class="a" style="left:132px;top:70px;width:56px;height:16px;background:#D4D0C8;border-top:1px solid #FFFFFF;border-left:1px solid #FFFFFF;border-right:1px solid #404040;border-bottom:1px solid #404040;box-shadow:inset -1px -1px 0 #808080"></div>
<div class="a t" style="left:138px;top:71px">步长</div>
<div class="a" style="left:188px;top:70px;width:40px;height:16px;background:#D4D0C8;border-top:1px solid #FFFFFF;border-left:1px solid #FFFFFF;border-right:1px solid #404040;border-bottom:1px solid #404040;box-shadow:inset -1px -1px 0 #808080"></div>
<div class="a t" style="left:194px;top:71px">上限</div>
<div class="a" style="left:228px;top:70px;width:51px;height:16px;background:#D4D0C8;border-top:1px solid #FFFFFF;border-left:1px solid #FFFFFF;border-right:1px solid #404040;border-bottom:1px solid #404040;box-shadow:inset -1px -1px 0 #808080"></div>
<div class="a t" style="left:234px;top:71px">相位</div>
<div class="a" style="left:279px;top:70px;width:25px;height:16px;background:#D4D0C8;border-top:1px solid #FFFFFF;border-left:1px solid #FFFFFF;border-right:1px solid #404040;border-bottom:1px solid #404040;box-shadow:inset -1px -1px 0 #808080"></div>
<div class="a t" style="left:285px;top:71px">变</div>
<div class="a" style="left:304px;top:70px;width:50px;height:16px;background:#D4D0C8;border-top:1px solid #FFFFFF;border-left:1px solid #FFFFFF;border-right:1px solid #404040;border-bottom:1px solid #404040;box-shadow:inset -1px -1px 0 #808080"></div>
<div class="a t" style="left:310px;top:71px">步长</div>
<div class="a" style="left:133px;top:88px;width:54px;height:16px;background:#FFFFD6"></div>
<div class="a" style="left:305px;top:88px;width:49px;height:16px;background:#FFFFD6"></div>
<div class="a" style="left:11px;top:90px;width:12px;height:12px;background:#FFFF00"></div>
<div class="a m" style="left:27px;top:91px;color:#000">UA</div>
<div class="a m" style="left:53px;top:91px;color:#000">10.000</div>
<div class="a m" style="left:138px;top:91px;color:#808080">1.000</div>
<div class="a m" style="left:194px;top:91px;color:#000">120</div>
<div class="a m" style="left:234px;top:91px;color:#000">0.0</div>
<div class="a m" style="left:310px;top:91px;color:#808080">1.0</div>
<div class="a" style="left:133px;top:105px;width:54px;height:16px;background:#FFFFD6"></div>
<div class="a" style="left:305px;top:105px;width:49px;height:16px;background:#FFFFD6"></div>
<div class="a" style="left:11px;top:107px;width:12px;height:12px;background:#00FF00"></div>
<div class="a m" style="left:27px;top:108px;color:#000">UB</div>
<div class="a m" style="left:53px;top:108px;color:#000">10.000</div>
<div class="a m" style="left:138px;top:108px;color:#808080">1.000</div>
<div class="a m" style="left:194px;top:108px;color:#000">120</div>
<div class="a m" style="left:234px;top:108px;color:#000">-120.0</div>
<div class="a m" style="left:310px;top:108px;color:#808080">1.0</div>
<div class="a" style="left:133px;top:122px;width:54px;height:16px;background:#FFFFD6"></div>
<div class="a" style="left:305px;top:122px;width:49px;height:16px;background:#FFFFD6"></div>
<div class="a" style="left:11px;top:124px;width:12px;height:12px;background:#FF0000"></div>
<div class="a m" style="left:27px;top:125px;color:#000">UC</div>
<div class="a m" style="left:53px;top:125px;color:#000">10.000</div>
<div class="a m" style="left:138px;top:125px;color:#808080">1.000</div>
<div class="a m" style="left:194px;top:125px;color:#000">120</div>
<div class="a m" style="left:234px;top:125px;color:#000">120.0</div>
<div class="a m" style="left:310px;top:125px;color:#808080">1.0</div>
<div class="a" style="left:133px;top:139px;width:54px;height:16px;background:#FFFFD6"></div>
<div class="a" style="left:305px;top:139px;width:49px;height:16px;background:#FFFFD6"></div>
<div class="a" style="left:11px;top:141px;width:12px;height:12px;background:#FFFF00"></div>
<div class="a m" style="left:27px;top:142px;color:#000">IA</div>
<div class="a m" style="left:53px;top:142px;color:#000">1.000</div>
<div class="a m" style="left:138px;top:142px;color:#808080">1.000</div>
<div class="a m" style="left:194px;top:142px;color:#000">40</div>
<div class="a m" style="left:234px;top:142px;color:#000">0.0</div>
<div class="a m" style="left:310px;top:142px;color:#808080">1.0</div>
<div class="a" style="left:133px;top:156px;width:54px;height:16px;background:#FFFFD6"></div>
<div class="a" style="left:305px;top:156px;width:49px;height:16px;background:#FFFFD6"></div>
<div class="a" style="left:11px;top:158px;width:12px;height:12px;background:#00FF00"></div>
<div class="a m" style="left:27px;top:159px;color:#000">IB</div>
<div class="a m" style="left:53px;top:159px;color:#000">1.000</div>
<div class="a m" style="left:138px;top:159px;color:#808080">1.000</div>
<div class="a m" style="left:194px;top:159px;color:#000">40</div>
<div class="a m" style="left:234px;top:159px;color:#000">-120.0</div>
<div class="a m" style="left:310px;top:159px;color:#808080">1.0</div>
<div class="a" style="left:133px;top:173px;width:54px;height:16px;background:#FFFFD6"></div>
<div class="a" style="left:305px;top:173px;width:49px;height:16px;background:#FFFFD6"></div>
<div class="a" style="left:11px;top:175px;width:12px;height:12px;background:#FF0000"></div>
<div class="a m" style="left:27px;top:176px;color:#000">IC</div>
<div class="a m" style="left:53px;top:176px;color:#000">1.000</div>
<div class="a m" style="left:138px;top:176px;color:#808080">1.000</div>
<div class="a m" style="left:194px;top:176px;color:#000">40</div>
<div class="a m" style="left:234px;top:176px;color:#000">120.0</div>
<div class="a m" style="left:310px;top:176px;color:#808080">1.0</div>
<div class="a" style="left:133px;top:190px;width:54px;height:16px;background:#FFFFD6"></div>
<div class="a" style="left:305px;top:190px;width:49px;height:16px;background:#FFFFD6"></div>
<div class="a" style="left:11px;top:192px;width:12px;height:12px;background:#0000FF"></div>
<div class="a m" style="left:27px;top:193px;color:#000">Ux</div>
<div class="a m" style="left:53px;top:193px;color:#000">10.000</div>
<div class="a m" style="left:138px;top:193px;color:#808080">1.000</div>
<div class="a m" style="left:194px;top:193px;color:#000">120</div>
<div class="a m" style="left:234px;top:193px;color:#000">0.0</div>
<div class="a m" style="left:310px;top:193px;color:#808080">1.0</div>
<div class="a" style="left:133px;top:207px;width:54px;height:16px;background:#FFFFD6"></div>
<div class="a" style="left:305px;top:207px;width:49px;height:16px;background:#FFFFD6"></div>
<div class="a" style="left:229px;top:207px;width:75px;height:16px;background:#FFFFD6"></div>
<div class="a m" style="left:27px;top:210px;color:#000">Hz</div>
<div class="a m" style="left:53px;top:210px;color:#000">50.000</div>
<div class="a m" style="left:138px;top:210px;color:#808080">0.000</div>
<div class="a m" style="left:194px;top:210px;color:#000">1000</div>
<div class="a" style="left:7px;top:87px;width:348px;height:1px;background:#D4D0C8"></div>
<div class="a" style="left:7px;top:104px;width:348px;height:1px;background:#D4D0C8"></div>
<div class="a" style="left:7px;top:121px;width:348px;height:1px;background:#D4D0C8"></div>
<div class="a" style="left:7px;top:138px;width:348px;height:1px;background:#D4D0C8"></div>
<div class="a" style="left:7px;top:155px;width:348px;height:1px;background:#D4D0C8"></div>
<div class="a" style="left:7px;top:172px;width:348px;height:1px;background:#D4D0C8"></div>
<div class="a" style="left:7px;top:189px;width:348px;height:1px;background:#D4D0C8"></div>
<div class="a" style="left:7px;top:206px;width:348px;height:1px;background:#D4D0C8"></div>
<div class="a" style="left:7px;top:223px;width:348px;height:1px;background:#D4D0C8"></div>
<div class="a" style="left:47px;top:87px;width:1px;height:137px;background:#D4D0C8"></div>
<div class="a" style="left:107px;top:87px;width:1px;height:137px;background:#D4D0C8"></div>
<div class="a" style="left:132px;top:87px;width:1px;height:137px;background:#D4D0C8"></div>
<div class="a" style="left:188px;top:87px;width:1px;height:137px;background:#D4D0C8"></div>
<div class="a" style="left:228px;top:87px;width:1px;height:137px;background:#D4D0C8"></div>
<div class="a" style="left:279px;top:87px;width:1px;height:137px;background:#D4D0C8"></div>
<div class="a" style="left:304px;top:87px;width:1px;height:137px;background:#D4D0C8"></div>
<div class="a" style="left:354px;top:87px;width:1px;height:137px;background:#D4D0C8"></div>
<div class="a" style="left:5px;top:68px;width:351px;height:1px;background:#808080"></div>
<div class="a" style="left:5px;top:68px;width:1px;height:158px;background:#808080"></div>
<div class="a" style="left:6px;top:69px;width:349px;height:1px;background:#404040"></div>
<div class="a" style="left:6px;top:69px;width:1px;height:156px;background:#404040"></div>
<div class="a" style="left:5px;top:225px;width:351px;height:1px;background:#FFFFFF"></div>
<div class="a" style="left:355px;top:68px;width:1px;height:158px;background:#FFFFFF"></div>
<div class="a m" style="left:10px;top:234px;line-height:14px">Ux:</div>
<div class="a" style="left:34px;top:227px;width:125px;height:20px;background:#fff;border-top:1px solid #808080;border-left:1px solid #808080;border-right:1px solid #FFFFFF;border-bottom:1px solid #FFFFFF;box-shadow:inset 1px 1px 0 #404040, inset -1px -1px 0 #D4D0C8"></div>
<div class="a t" style="left:38px;top:230px;line-height:14px">任意方式</div>
<div class="a" style="left:141px;top:229px;width:16px;height:16px;background:#D4D0C8;border-top:1px solid #FFFFFF;border-left:1px solid #FFFFFF;border-right:1px solid #404040;border-bottom:1px solid #404040;box-shadow:inset -1px -1px 0 #808080"></div>
<svg class="a" style="left:145px;top:235px" width="8" height="4" shape-rendering="crispEdges"><path d="M0 0h7v1h-1v1h-1v1h-1v1h-1v-1h-1v-1h-1v-1h-1z" fill="#000"/></svg>
<div class="a" style="left:14px;top:257px;width:143px;height:53px;border-top:1px solid #808080;border-left:1px solid #808080;border-right:1px solid #FFFFFF;border-bottom:1px solid #FFFFFF;box-shadow:inset 1px 1px 0 #FFFFFF, inset -1px -1px 0 #808080"></div>
<svg class="a" style="left:33px;top:269px" width="12" height="12" viewBox="0 0 12 12" shape-rendering="crispEdges">
<path d="M4 0h4v1h2v1h-6v1h-1v1h-1v4h-1v2h-1v-6h1v-2h1v-1h2z" fill="#808080"/>
<path d="M4 1h4v1h-4v1h-1v1h-1v4h-1v-4h1v-2h1v-1h1z" fill="#404040"/>
<path d="M10 2h1v2h1v4h-1v2h-1v1h-2v1h-4v-1h-2v-1h2v1h4v-1h2v-2h1v-4h-1z" fill="#fff"/>
<path d="M9 3h1v1h1v4h-1v2h-2v1h-4v-1h4v-1h1v-1h1v-4h-1z" fill="#D4D0C8"/>
<path d="M4 2h4v1h1v1h1v4h-1v1h-1v1h-4v-1h-1v-1h-1v-4h1v-1h1z" fill="#fff"/>

</svg>
<div class="a t" style="left:50px;top:268px;line-height:14px">测接点动作</div>
<svg class="a" style="left:33px;top:288px" width="12" height="12" viewBox="0 0 12 12" shape-rendering="crispEdges">
<path d="M4 0h4v1h2v1h-6v1h-1v1h-1v4h-1v2h-1v-6h1v-2h1v-1h2z" fill="#808080"/>
<path d="M4 1h4v1h-4v1h-1v1h-1v4h-1v-4h1v-2h1v-1h1z" fill="#404040"/>
<path d="M10 2h1v2h1v4h-1v2h-1v1h-2v1h-4v-1h-2v-1h2v1h4v-1h2v-2h1v-4h-1z" fill="#fff"/>
<path d="M9 3h1v1h1v4h-1v2h-2v1h-4v-1h4v-1h1v-1h1v-4h-1z" fill="#D4D0C8"/>
<path d="M4 2h4v1h1v1h1v4h-1v1h-1v1h-4v-1h-1v-1h-1v-4h1v-1h1z" fill="#fff"/>
<path d="M5 4h2v1h1v2h-1v1h-2v-1h-1v-2h1z" fill="#000"/>
</svg>
<div class="a t" style="left:50px;top:287px;line-height:14px">测动作和返回</div>
<div class="a t" style="left:198px;top:230px;line-height:14px">开关变位去抖时间</div>
<div class="a" style="left:298px;top:229px;width:40px;height:21px;background:#fff;border-top:1px solid #808080;border-left:1px solid #808080;border-right:1px solid #FFFFFF;border-bottom:1px solid #FFFFFF;box-shadow:inset 1px 1px 0 #404040, inset -1px -1px 0 #D4D0C8"></div>
<div class="a m" style="left:301px;top:232px;line-height:14px">5</div>
<div class="a m" style="left:341px;top:231px;line-height:14px">ms</div>
<div class="a" style="left:202px;top:254px;width:155px;height:84px;border-top:1px solid #808080;border-left:1px solid #808080;border-right:1px solid #FFFFFF;border-bottom:1px solid #FFFFFF;box-shadow:inset 1px 1px 0 #FFFFFF, inset -1px -1px 0 #808080"></div>
<div class="a" style="left:281px;top:259px;width:71px;height:51px;border-top:1px solid #808080;border-left:1px solid #808080;border-right:1px solid #FFFFFF;border-bottom:1px solid #FFFFFF;box-shadow:inset 1px 1px 0 #FFFFFF, inset -1px -1px 0 #808080"></div>
<svg class="a" style="left:218px;top:266px" width="12" height="12" viewBox="0 0 12 12" shape-rendering="crispEdges">
<path d="M4 0h4v1h2v1h-6v1h-1v1h-1v4h-1v2h-1v-6h1v-2h1v-1h2z" fill="#808080"/>
<path d="M4 1h4v1h-4v1h-1v1h-1v4h-1v-4h1v-2h1v-1h1z" fill="#404040"/>
<path d="M10 2h1v2h1v4h-1v2h-1v1h-2v1h-4v-1h-2v-1h2v1h4v-1h2v-2h1v-4h-1z" fill="#fff"/>
<path d="M9 3h1v1h1v4h-1v2h-2v1h-4v-1h4v-1h1v-1h1v-4h-1z" fill="#D4D0C8"/>
<path d="M4 2h4v1h1v1h1v4h-1v1h-1v1h-4v-1h-1v-1h-1v-4h1v-1h1z" fill="#fff"/>

</svg>
<div class="a t" style="left:235px;top:265px;line-height:14px">手动</div>
<svg class="a" style="left:218px;top:282px" width="12" height="12" viewBox="0 0 12 12" shape-rendering="crispEdges">
<path d="M4 0h4v1h2v1h-6v1h-1v1h-1v4h-1v2h-1v-6h1v-2h1v-1h2z" fill="#808080"/>
<path d="M4 1h4v1h-4v1h-1v1h-1v4h-1v-4h1v-2h1v-1h1z" fill="#404040"/>
<path d="M10 2h1v2h1v4h-1v2h-1v1h-2v1h-4v-1h-2v-1h2v1h4v-1h2v-2h1v-4h-1z" fill="#fff"/>
<path d="M9 3h1v1h1v4h-1v2h-2v1h-4v-1h4v-1h1v-1h1v-4h-1z" fill="#D4D0C8"/>
<path d="M4 2h4v1h1v1h1v4h-1v1h-1v1h-4v-1h-1v-1h-1v-4h1v-1h1z" fill="#fff"/>
<path d="M5 4h2v1h1v2h-1v1h-2v-1h-1v-2h1z" fill="#000"/>
</svg>
<div class="a t" style="left:235px;top:281px;line-height:14px">全自动</div>
<svg class="a" style="left:218px;top:299px" width="12" height="12" viewBox="0 0 12 12" shape-rendering="crispEdges">
<path d="M4 0h4v1h2v1h-6v1h-1v1h-1v4h-1v2h-1v-6h1v-2h1v-1h2z" fill="#808080"/>
<path d="M4 1h4v1h-4v1h-1v1h-1v4h-1v-4h1v-2h1v-1h1z" fill="#404040"/>
<path d="M10 2h1v2h1v4h-1v2h-1v1h-2v1h-4v-1h-2v-1h2v1h4v-1h2v-2h1v-4h-1z" fill="#fff"/>
<path d="M9 3h1v1h1v4h-1v2h-2v1h-4v-1h4v-1h1v-1h1v-4h-1z" fill="#D4D0C8"/>
<path d="M4 2h4v1h1v1h1v4h-1v1h-1v1h-4v-1h-1v-1h-1v-4h1v-1h1z" fill="#fff"/>

</svg>
<div class="a t" style="left:235px;top:298px;line-height:14px">半自动</div>
<svg class="a" style="left:293px;top:269px" width="12" height="12" viewBox="0 0 12 12" shape-rendering="crispEdges">
<path d="M4 0h4v1h2v1h-6v1h-1v1h-1v4h-1v2h-1v-6h1v-2h1v-1h2z" fill="#808080"/>
<path d="M4 1h4v1h-4v1h-1v1h-1v4h-1v-4h1v-2h1v-1h1z" fill="#404040"/>
<path d="M10 2h1v2h1v4h-1v2h-1v1h-2v1h-4v-1h-2v-1h2v1h4v-1h2v-2h1v-4h-1z" fill="#fff"/>
<path d="M9 3h1v1h1v4h-1v2h-2v1h-4v-1h4v-1h1v-1h1v-4h-1z" fill="#D4D0C8"/>
<path d="M4 2h4v1h1v1h1v4h-1v1h-1v1h-4v-1h-1v-1h-1v-4h1v-1h1z" fill="#fff"/>
<path d="M5 4h2v1h1v2h-1v1h-2v-1h-1v-2h1z" fill="#000"/>
</svg>
<div class="a t" style="left:310px;top:268px;line-height:14px">递增</div>
<svg class="a" style="left:293px;top:290px" width="12" height="12" viewBox="0 0 12 12" shape-rendering="crispEdges">
<path d="M4 0h4v1h2v1h-6v1h-1v1h-1v4h-1v2h-1v-6h1v-2h1v-1h2z" fill="#808080"/>
<path d="M4 1h4v1h-4v1h-1v1h-1v4h-1v-4h1v-2h1v-1h1z" fill="#404040"/>
<path d="M10 2h1v2h1v4h-1v2h-1v1h-2v1h-4v-1h-2v-1h2v1h4v-1h2v-2h1v-4h-1z" fill="#fff"/>
<path d="M9 3h1v1h1v4h-1v2h-2v1h-4v-1h4v-1h1v-1h1v-4h-1z" fill="#D4D0C8"/>
<path d="M4 2h4v1h1v1h1v4h-1v1h-1v1h-4v-1h-1v-1h-1v-4h1v-1h1z" fill="#fff"/>

</svg>
<div class="a t" style="left:310px;top:289px;line-height:14px">递减</div>
<div class="a t" style="left:217px;top:317px;line-height:14px">间隔时间</div>
<div class="a" style="left:272px;top:314px;width:54px;height:21px;background:#fff;border-top:1px solid #808080;border-left:1px solid #808080;border-right:1px solid #FFFFFF;border-bottom:1px solid #FFFFFF;box-shadow:inset 1px 1px 0 #404040, inset -1px -1px 0 #D4D0C8"></div>
<div class="a m" style="left:275px;top:317px;line-height:14px">1000</div>
<div class="a m" style="left:333px;top:317px;line-height:14px">ms</div>
<div class="a" style="left:359px;top:68px;width:275px;height:275px;background:#000"></div>
<svg class="a" style="left:0;top:0" width="637" height="488" viewBox="0 0 637 488"><g shape-rendering="crispEdges"><circle cx="500.5" cy="205.5" r="16.5" fill="none" stroke="#505050" stroke-width="1"/><circle cx="500.5" cy="205.5" r="42" fill="none" stroke="#505050" stroke-width="1"/><circle cx="500.5" cy="205.5" r="67" fill="none" stroke="#505050" stroke-width="1"/><circle cx="500.5" cy="205.5" r="92.5" fill="none" stroke="#505050" stroke-width="1"/><circle cx="500.5" cy="205.5" r="118" fill="none" stroke="#505050" stroke-width="1"/><line x1="500.5" y1="205.5" x2="618.50" y2="205.50" stroke="#505050" stroke-width="1"/><line x1="500.5" y1="205.5" x2="602.69" y2="146.50" stroke="#505050" stroke-width="1"/><line x1="500.5" y1="205.5" x2="559.50" y2="103.31" stroke="#505050" stroke-width="1"/><line x1="500.5" y1="205.5" x2="500.50" y2="87.50" stroke="#505050" stroke-width="1"/><line x1="500.5" y1="205.5" x2="441.50" y2="103.31" stroke="#505050" stroke-width="1"/><line x1="500.5" y1="205.5" x2="398.31" y2="146.50" stroke="#505050" stroke-width="1"/><line x1="500.5" y1="205.5" x2="382.50" y2="205.50" stroke="#505050" stroke-width="1"/><line x1="500.5" y1="205.5" x2="398.31" y2="264.50" stroke="#505050" stroke-width="1"/><line x1="500.5" y1="205.5" x2="441.50" y2="307.69" stroke="#505050" stroke-width="1"/><line x1="500.5" y1="205.5" x2="500.50" y2="323.50" stroke="#505050" stroke-width="1"/><line x1="500.5" y1="205.5" x2="559.50" y2="307.69" stroke="#505050" stroke-width="1"/><line x1="500.5" y1="205.5" x2="602.69" y2="264.50" stroke="#505050" stroke-width="1"/><line x1="500.5" y1="205.5" x2="505.50" y2="205.50" stroke="#FFFF00" stroke-width="1"/><line x1="505.50" y1="205.50" x2="502.90" y2="204.00" stroke="#FFFF00" stroke-width="1"/><line x1="505.50" y1="205.50" x2="502.90" y2="207.00" stroke="#FFFF00" stroke-width="1"/><line x1="500.5" y1="205.5" x2="499.00" y2="202.90" stroke="#FF0000" stroke-width="1"/><line x1="499.00" y1="202.90" x2="499.00" y2="208.90" stroke="#FF0000" stroke-width="1"/><line x1="499.00" y1="202.90" x2="504.20" y2="205.90" stroke="#FF0000" stroke-width="1"/><line x1="500.5" y1="205.5" x2="499.00" y2="208.10" stroke="#00FF00" stroke-width="1"/><line x1="499.00" y1="208.10" x2="504.20" y2="205.10" stroke="#00FF00" stroke-width="1"/><line x1="499.00" y1="208.10" x2="499.00" y2="202.10" stroke="#00FF00" stroke-width="1"/><line x1="500.5" y1="205.5" x2="510.00" y2="205.50" stroke="#FFFF00" stroke-width="1"/><line x1="510.00" y1="205.50" x2="506.10" y2="203.25" stroke="#FFFF00" stroke-width="1"/><line x1="510.00" y1="205.50" x2="506.10" y2="207.75" stroke="#FFFF00" stroke-width="1"/><line x1="500.5" y1="205.5" x2="495.75" y2="197.27" stroke="#FF0000" stroke-width="1"/><line x1="495.75" y1="197.27" x2="495.75" y2="204.27" stroke="#FF0000" stroke-width="1"/><line x1="495.75" y1="197.27" x2="501.81" y2="200.77" stroke="#FF0000" stroke-width="1"/><line x1="500.5" y1="205.5" x2="495.75" y2="213.73" stroke="#00FF00" stroke-width="1"/><line x1="495.75" y1="213.73" x2="501.81" y2="210.23" stroke="#00FF00" stroke-width="1"/><line x1="495.75" y1="213.73" x2="495.75" y2="206.73" stroke="#00FF00" stroke-width="1"/><line x1="368" y1="305.5" x2="399" y2="305.5" stroke="#FFFF00" stroke-width="1" shape-rendering="crispEdges"/><path d="M393.5 302.5 L399 305.5 L393.5 308.5" stroke="#FFFF00" fill="none" stroke-width="1"/><text x="400" y="307" font-family="Liberation Sans" font-size="12" fill="#FFFF00">UA</text><line x1="584" y1="305.5" x2="618" y2="305.5" stroke="#FFFF00" stroke-width="1" shape-rendering="crispEdges"/><path d="M612.5 302.5 L618 305.5 L612.5 308.5" stroke="#FFFF00" fill="none" stroke-width="1"/><text x="619" y="307" font-family="Liberation Sans" font-size="12" fill="#FFFF00">IA</text><line x1="368" y1="315.5" x2="399" y2="315.5" stroke="#00FF00" stroke-width="1" shape-rendering="crispEdges"/><path d="M393.5 312.5 L399 315.5 L393.5 318.5" stroke="#00FF00" fill="none" stroke-width="1"/><text x="400" y="317" font-family="Liberation Sans" font-size="12" fill="#00FF00">UB</text><line x1="584" y1="315.5" x2="618" y2="315.5" stroke="#00FF00" stroke-width="1" shape-rendering="crispEdges"/><path d="M612.5 312.5 L618 315.5 L612.5 318.5" stroke="#00FF00" fill="none" stroke-width="1"/><text x="619" y="317" font-family="Liberation Sans" font-size="12" fill="#00FF00">IB</text><line x1="368" y1="325.5" x2="399" y2="325.5" stroke="#FF0000" stroke-width="1" shape-rendering="crispEdges"/><path d="M393.5 322.5 L399 325.5 L393.5 328.5" stroke="#FF0000" fill="none" stroke-width="1"/><text x="400" y="327" font-family="Liberation Sans" font-size="12" fill="#FF0000">UC</text><line x1="584" y1="325.5" x2="618" y2="325.5" stroke="#FF0000" stroke-width="1" shape-rendering="crispEdges"/><path d="M612.5 322.5 L618 325.5 L612.5 328.5" stroke="#FF0000" fill="none" stroke-width="1"/><text x="619" y="327" font-family="Liberation Sans" font-size="12" fill="#FF0000">IC</text></g></svg>
<div class="a" style="left:7px;top:319px;width:149px;height:137px;background:#D4D0C8"></div>
<div class="a" style="left:7px;top:319px;width:40px;height:16px;background:#D4D0C8;border-top:1px solid #FFFFFF;border-left:1px solid #FFFFFF;border-right:1px solid #404040;border-bottom:1px solid #404040;box-shadow:inset -1px -1px 0 #808080"></div>
<div class="a t" style="left:12px;top:320px">参量</div>
<div class="a" style="left:47px;top:319px;width:58px;height:16px;background:#D4D0C8;border-top:1px solid #FFFFFF;border-left:1px solid #FFFFFF;border-right:1px solid #404040;border-bottom:1px solid #404040;box-shadow:inset -1px -1px 0 #808080"></div>
<div class="a t" style="left:52px;top:320px">幅值</div>
<div class="a" style="left:105px;top:319px;width:51px;height:16px;background:#D4D0C8;border-top:1px solid #FFFFFF;border-left:1px solid #FFFFFF;border-right:1px solid #404040;border-bottom:1px solid #404040;box-shadow:inset -1px -1px 0 #808080"></div>
<div class="a t" style="left:110px;top:320px">相位</div>
<div class="a" style="left:7px;top:335px;width:149px;height:1px;background:#D6FFFF"></div>
<div class="a" style="left:7px;top:337px;width:149px;height:12px;background:#D6FFFF"></div>
<div class="a m" style="left:11px;top:338px;color:#000">UAB</div>
<div class="a m" style="left:52px;top:338px;color:#000">17.321</div>
<div class="a m" style="left:110px;top:338px;color:#000">30.0</div>
<div class="a" style="left:7px;top:350px;width:149px;height:12px;background:#D6FFFF"></div>
<div class="a m" style="left:11px;top:351px;color:#000">UBC</div>
<div class="a m" style="left:52px;top:351px;color:#000">17.321</div>
<div class="a m" style="left:110px;top:351px;color:#000">-90.0</div>
<div class="a" style="left:7px;top:363px;width:149px;height:12px;background:#D6FFFF"></div>
<div class="a m" style="left:11px;top:364px;color:#000">UCA</div>
<div class="a m" style="left:52px;top:364px;color:#000">17.321</div>
<div class="a m" style="left:110px;top:364px;color:#000">150.0</div>
<div class="a" style="left:7px;top:376px;width:149px;height:12px;background:#D6FFFF"></div>
<div class="a m" style="left:11px;top:377px;color:#000">Uo</div>
<div class="a m" style="left:52px;top:377px;color:#000">0.000</div>
<div class="a m" style="left:110px;top:377px;color:#000">180.0</div>
<div class="a" style="left:7px;top:389px;width:149px;height:12px;background:#D6FFFF"></div>
<div class="a m" style="left:11px;top:390px;color:#000">U+</div>
<div class="a m" style="left:52px;top:390px;color:#000">10.000</div>
<div class="a m" style="left:110px;top:390px;color:#000">0.0</div>
<div class="a" style="left:7px;top:402px;width:149px;height:12px;background:#D6FFFF"></div>
<div class="a m" style="left:11px;top:403px;color:#000">U-</div>
<div class="a m" style="left:52px;top:403px;color:#000">0.000</div>
<div class="a m" style="left:110px;top:403px;color:#000">0.0</div>
<div class="a" style="left:7px;top:415px;width:149px;height:12px;background:#D6FFFF"></div>
<div class="a m" style="left:11px;top:416px;color:#000">Io</div>
<div class="a m" style="left:52px;top:416px;color:#000">0.000</div>
<div class="a m" style="left:110px;top:416px;color:#000">180.0</div>
<div class="a" style="left:7px;top:428px;width:149px;height:12px;background:#D6FFFF"></div>
<div class="a m" style="left:11px;top:429px;color:#000">I+</div>
<div class="a m" style="left:52px;top:429px;color:#000">1.000</div>
<div class="a m" style="left:110px;top:429px;color:#000">0.0</div>
<div class="a" style="left:7px;top:441px;width:149px;height:12px;background:#D6FFFF"></div>
<div class="a m" style="left:11px;top:442px;color:#000">I-</div>
<div class="a m" style="left:52px;top:442px;color:#000">0.000</div>
<div class="a m" style="left:110px;top:442px;color:#000">0.0</div>
<div class="a" style="left:7px;top:454px;width:149px;height:2px;background:#D6FFFF"></div>
<div class="a" style="left:7px;top:336px;width:149px;height:1px;background:#D4D0C8"></div>
<div class="a" style="left:7px;top:349px;width:149px;height:1px;background:#D4D0C8"></div>
<div class="a" style="left:7px;top:362px;width:149px;height:1px;background:#D4D0C8"></div>
<div class="a" style="left:7px;top:375px;width:149px;height:1px;background:#D4D0C8"></div>
<div class="a" style="left:7px;top:388px;width:149px;height:1px;background:#D4D0C8"></div>
<div class="a" style="left:7px;top:401px;width:149px;height:1px;background:#D4D0C8"></div>
<div class="a" style="left:7px;top:414px;width:149px;height:1px;background:#D4D0C8"></div>
<div class="a" style="left:7px;top:427px;width:149px;height:1px;background:#D4D0C8"></div>
<div class="a" style="left:7px;top:440px;width:149px;height:1px;background:#D4D0C8"></div>
<div class="a" style="left:7px;top:453px;width:149px;height:1px;background:#D4D0C8"></div>
<div class="a" style="left:47px;top:336px;width:1px;height:120px;background:#D4D0C8"></div>
<div class="a" style="left:105px;top:336px;width:1px;height:120px;background:#D4D0C8"></div>
<div class="a" style="left:5px;top:317px;width:152px;height:1px;background:#808080"></div>
<div class="a" style="left:5px;top:317px;width:1px;height:140px;background:#808080"></div>
<div class="a" style="left:6px;top:318px;width:150px;height:1px;background:#404040"></div>
<div class="a" style="left:6px;top:318px;width:1px;height:138px;background:#404040"></div>
<div class="a" style="left:5px;top:456px;width:152px;height:1px;background:#FFFFFF"></div>
<div class="a" style="left:156px;top:317px;width:1px;height:140px;background:#FFFFFF"></div>
<div class="a" style="left:204px;top:345px;width:171px;height:111px;background:#D4D0C8"></div>
<div class="a" style="left:204px;top:345px;width:48px;height:16px;background:#D4D0C8;border-top:1px solid #FFFFFF;border-left:1px solid #FFFFFF;border-right:1px solid #404040;border-bottom:1px solid #404040;box-shadow:inset -1px -1px 0 #808080"></div>
<div class="a t" style="left:209px;top:346px">开入量</div>
<div class="a" style="left:252px;top:345px;width:60px;height:16px;background:#D4D0C8;border-top:1px solid #FFFFFF;border-left:1px solid #FFFFFF;border-right:1px solid #404040;border-bottom:1px solid #404040;box-shadow:inset -1px -1px 0 #808080"></div>
<div class="a t" style="left:257px;top:346px">动作时间</div>
<div class="a" style="left:312px;top:345px;width:60px;height:16px;background:#D4D0C8;border-top:1px solid #FFFFFF;border-left:1px solid #FFFFFF;border-right:1px solid #404040;border-bottom:1px solid #404040;box-shadow:inset -1px -1px 0 #808080"></div>
<div class="a t" style="left:317px;top:346px">返回时间</div>
<div class="a" style="left:372px;top:345px;width:4px;height:16px;background:#D4D0C8;border-top:1px solid #FFFFFF;border-left:1px solid #FFFFFF;border-right:1px solid #404040;border-bottom:1px solid #404040;box-shadow:inset -1px -1px 0 #808080"></div>
<div class="a" style="left:204px;top:361px;width:171px;height:1px;background:#FFE6FF"></div>
<div class="a" style="left:204px;top:363px;width:171px;height:12px;background:#FFE6FF"></div>
<div class="a m" style="left:208px;top:364px;color:#000">A</div>
<div class="a" style="left:204px;top:376px;width:171px;height:12px;background:#FFE6FF"></div>
<div class="a m" style="left:208px;top:377px;color:#000">B</div>
<div class="a" style="left:204px;top:389px;width:171px;height:12px;background:#FFE6FF"></div>
<div class="a m" style="left:208px;top:390px;color:#000">C</div>
<div class="a" style="left:204px;top:402px;width:171px;height:12px;background:#FFE6FF"></div>
<div class="a m" style="left:208px;top:403px;color:#000">R</div>
<div class="a" style="left:204px;top:415px;width:171px;height:12px;background:#FFE6FF"></div>
<div class="a m" style="left:208px;top:416px;color:#000">a</div>
<div class="a" style="left:204px;top:428px;width:171px;height:12px;background:#FFE6FF"></div>
<div class="a m" style="left:208px;top:429px;color:#000">b</div>
<div class="a" style="left:204px;top:441px;width:171px;height:12px;background:#FFE6FF"></div>
<div class="a m" style="left:208px;top:442px;color:#000">c</div>
<div class="a" style="left:204px;top:454px;width:171px;height:2px;background:#FFE6FF"></div>
<div class="a" style="left:204px;top:362px;width:171px;height:1px;background:#D4D0C8"></div>
<div class="a" style="left:204px;top:375px;width:171px;height:1px;background:#D4D0C8"></div>
<div class="a" style="left:204px;top:388px;width:171px;height:1px;background:#D4D0C8"></div>
<div class="a" style="left:204px;top:401px;width:171px;height:1px;background:#D4D0C8"></div>
<div class="a" style="left:204px;top:414px;width:171px;height:1px;background:#D4D0C8"></div>
<div class="a" style="left:204px;top:427px;width:171px;height:1px;background:#D4D0C8"></div>
<div class="a" style="left:204px;top:440px;width:171px;height:1px;background:#D4D0C8"></div>
<div class="a" style="left:204px;top:453px;width:171px;height:1px;background:#D4D0C8"></div>
<div class="a" style="left:252px;top:362px;width:1px;height:94px;background:#D4D0C8"></div>
<div class="a" style="left:312px;top:362px;width:1px;height:94px;background:#D4D0C8"></div>
<div class="a" style="left:372px;top:362px;width:1px;height:94px;background:#D4D0C8"></div>
<div class="a" style="left:202px;top:343px;width:174px;height:1px;background:#808080"></div>
<div class="a" style="left:202px;top:343px;width:1px;height:114px;background:#808080"></div>
<div class="a" style="left:203px;top:344px;width:172px;height:1px;background:#404040"></div>
<div class="a" style="left:203px;top:344px;width:1px;height:112px;background:#404040"></div>
<div class="a" style="left:202px;top:456px;width:174px;height:1px;background:#FFFFFF"></div>
<div class="a" style="left:375px;top:343px;width:1px;height:114px;background:#FFFFFF"></div>
<div class="a" style="left:374px;top:343px;width:1px;height:114px;background:#D4D0C8"></div>
<div class="a" style="left:375px;top:343px;width:1px;height:114px;background:#FFFFFF"></div>
<div class="a" style="left:376px;top:343px;width:1px;height:114px;background:#D4D0C8"></div>
<div class="a" style="left:379px;top:345px;width:236px;height:111px;background:#D4D0C8"></div>
<div class="a" style="left:379px;top:345px;width:22px;height:16px;background:#D4D0C8;border-top:1px solid #FFFFFF;border-left:1px solid #FFFFFF;border-right:1px solid #404040;border-bottom:1px solid #404040;box-shadow:inset -1px -1px 0 #808080"></div>
<div class="a" style="left:401px;top:345px;width:42px;height:16px;background:#D4D0C8;border-top:1px solid #FFFFFF;border-left:1px solid #FFFFFF;border-right:1px solid #404040;border-bottom:1px solid #404040;box-shadow:inset -1px -1px 0 #808080"></div>
<div class="a t" style="left:406px;top:346px">参量</div>
<div class="a" style="left:443px;top:345px;width:55px;height:16px;background:#D4D0C8;border-top:1px solid #FFFFFF;border-left:1px solid #FFFFFF;border-right:1px solid #404040;border-bottom:1px solid #404040;box-shadow:inset -1px -1px 0 #808080"></div>
<div class="a t" style="left:448px;top:346px">动作</div>
<div class="a" style="left:498px;top:345px;width:55px;height:16px;background:#D4D0C8;border-top:1px solid #FFFFFF;border-left:1px solid #FFFFFF;border-right:1px solid #404040;border-bottom:1px solid #404040;box-shadow:inset -1px -1px 0 #808080"></div>
<div class="a t" style="left:503px;top:346px">返回</div>
<div class="a" style="left:553px;top:345px;width:60px;height:16px;background:#D4D0C8;border-top:1px solid #FFFFFF;border-left:1px solid #FFFFFF;border-right:1px solid #404040;border-bottom:1px solid #404040;box-shadow:inset -1px -1px 0 #808080"></div>
<div class="a t" style="left:558px;top:346px">返回系数</div>
<div class="a" style="left:613px;top:345px;width:2px;height:16px;background:#D4D0C8;border-top:1px solid #FFFFFF;border-left:1px solid #FFFFFF;border-right:1px solid #404040;border-bottom:1px solid #404040;box-shadow:inset -1px -1px 0 #808080"></div>
<div class="a" style="left:379px;top:361px;width:236px;height:1px;background:#FFE6FF"></div>
<div class="a" style="left:379px;top:363px;width:236px;height:16px;background:#FFE6FF"></div>
<div class="a" style="left:383px;top:365px;width:13px;height:13px;background:#fff;border:2px solid #000"></div>
<div class="a m" style="left:407px;top:366px;color:#000">UA</div>
<div class="a" style="left:379px;top:380px;width:236px;height:16px;background:#FFE6FF"></div>
<div class="a" style="left:383px;top:382px;width:13px;height:13px;background:#fff;border:2px solid #000"></div>
<div class="a m" style="left:407px;top:383px;color:#000">UB</div>
<div class="a" style="left:379px;top:397px;width:236px;height:16px;background:#FFE6FF"></div>
<div class="a" style="left:383px;top:399px;width:13px;height:13px;background:#fff;border:2px solid #000"></div>
<div class="a m" style="left:407px;top:400px;color:#000">UC</div>
<div class="a" style="left:379px;top:414px;width:236px;height:16px;background:#FFE6FF"></div>
<div class="a" style="left:383px;top:416px;width:13px;height:13px;background:#fff;border:2px solid #000"></div>
<div class="a m" style="left:407px;top:417px;color:#000">IA</div>
<div class="a" style="left:379px;top:431px;width:236px;height:16px;background:#FFE6FF"></div>
<div class="a" style="left:383px;top:433px;width:13px;height:13px;background:#fff;border:2px solid #000"></div>
<div class="a m" style="left:407px;top:434px;color:#000">IB</div>
<div class="a" style="left:379px;top:448px;width:236px;height:8px;background:#FFE6FF"></div>
<div class="a" style="left:383px;top:450px;width:13px;height:13px;background:#fff;border:2px solid #000"></div>
<div class="a m" style="left:407px;top:451px;color:#000">IC</div>
<div class="a" style="left:379px;top:362px;width:236px;height:1px;background:#D4D0C8"></div>
<div class="a" style="left:379px;top:379px;width:236px;height:1px;background:#D4D0C8"></div>
<div class="a" style="left:379px;top:396px;width:236px;height:1px;background:#D4D0C8"></div>
<div class="a" style="left:379px;top:413px;width:236px;height:1px;background:#D4D0C8"></div>
<div class="a" style="left:379px;top:430px;width:236px;height:1px;background:#D4D0C8"></div>
<div class="a" style="left:379px;top:447px;width:236px;height:1px;background:#D4D0C8"></div>
<div class="a" style="left:401px;top:362px;width:1px;height:94px;background:#D4D0C8"></div>
<div class="a" style="left:443px;top:362px;width:1px;height:94px;background:#D4D0C8"></div>
<div class="a" style="left:498px;top:362px;width:1px;height:94px;background:#D4D0C8"></div>
<div class="a" style="left:553px;top:362px;width:1px;height:94px;background:#D4D0C8"></div>
<div class="a" style="left:613px;top:362px;width:1px;height:94px;background:#D4D0C8"></div>
<div class="a" style="left:379px;top:456px;width:254px;height:1px;background:#FFFFFF"></div>
<div class="a" style="left:377px;top:343px;width:257px;height:1px;background:#808080"></div>
<div class="a" style="left:377px;top:343px;width:1px;height:114px;background:#808080"></div>
<div class="a" style="left:378px;top:344px;width:255px;height:1px;background:#404040"></div>
<div class="a" style="left:378px;top:344px;width:1px;height:112px;background:#404040"></div>
<div class="a" style="left:377px;top:456px;width:257px;height:1px;background:#FFFFFF"></div>
<div class="a" style="left:633px;top:343px;width:1px;height:114px;background:#FFFFFF"></div>
<div class="a" style="left:377px;top:457px;width:259px;height:11px;background:#D4D0C8"></div>
<div class="a" style="left:616px;top:345px;width:16px;height:111px;background-color:#FFFFFF;background-image:repeating-conic-gradient(#D4D0C8 0 25%, #FFFFFF 0 50%);background-size:2px 2px"></div>
<div class="a" style="left:632px;top:345px;width:1px;height:111px;background:#D4D0C8"></div>
<div class="a" style="left:616px;top:345px;width:16px;height:15px;background:#D4D0C8;border-top:1px solid #FFFFFF;border-left:1px solid #FFFFFF;border-right:1px solid #404040;border-bottom:1px solid #404040;box-shadow:inset -1px -1px 0 #808080"></div>
<svg class="a" style="left:620px;top:350px" width="7" height="4" shape-rendering="crispEdges"><path d="M3 0h1v1h1v1h1v1h1v1h-7v-1h1v-1h1v-1h1z" fill="#000"/></svg>
<div class="a" style="left:616px;top:360px;width:16px;height:13px;background:#D4D0C8;border-top:1px solid #FFFFFF;border-left:1px solid #FFFFFF;border-right:1px solid #404040;border-bottom:1px solid #404040;box-shadow:inset -1px -1px 0 #808080"></div>
<div class="a" style="left:616px;top:440px;width:16px;height:15px;background:#D4D0C8;border-top:1px solid #FFFFFF;border-left:1px solid #FFFFFF;border-right:1px solid #404040;border-bottom:1px solid #404040;box-shadow:inset -1px -1px 0 #808080"></div>
<svg class="a" style="left:620px;top:446px" width="7" height="4" shape-rendering="crispEdges"><path d="M0 0h7v1h-1v1h-1v1h-1v1h-1v-1h-1v-1h-1v-1h-1z" fill="#000"/></svg>
<div class="a t" style="left:4px;top:472px;line-height:14px">就绪</div>
<div class="a" style="left:293px;top:471px;width:106px;height:16px;border-top:1px solid #808080;border-left:1px solid #808080;border-right:1px solid #FFFFFF;border-bottom:1px solid #FFFFFF"></div>
<div class="a t" style="left:295px;top:472px;line-height:14px">运行时间: 0.00s</div>
<div class="a" style="left:400px;top:471px;width:233px;height:16px;border-top:1px solid #808080;border-left:1px solid #808080;border-right:1px solid #FFFFFF;border-bottom:1px solid #FFFFFF"></div>
<div class="a t" style="left:402px;top:472px;line-height:14px">开关量:</div>
<div class="a t" style="left:444px;top:472px;line-height:14px;font-size:11px">A</div>
<div class="a" style="left:451px;top:473px;width:11px;height:11px;border-radius:50%;background:#808080"></div>
<div class="a t" style="left:468px;top:472px;line-height:14px;font-size:11px">B</div>
<div class="a" style="left:475px;top:473px;width:11px;height:11px;border-radius:50%;background:#808080"></div>
<div class="a t" style="left:492px;top:472px;line-height:14px;font-size:11px">C</div>
<div class="a" style="left:499px;top:473px;width:11px;height:11px;border-radius:50%;background:#808080"></div>
<div class="a t" style="left:516px;top:472px;line-height:14px;font-size:11px">R</div>
<div class="a" style="left:523px;top:473px;width:11px;height:11px;border-radius:50%;background:#808080"></div>
<div class="a t" style="left:540px;top:472px;line-height:14px;font-size:11px">a</div>
<div class="a" style="left:547px;top:473px;width:11px;height:11px;border-radius:50%;background:#808080"></div>
<div class="a t" style="left:564px;top:472px;line-height:14px;font-size:11px">b</div>
<div class="a" style="left:571px;top:473px;width:11px;height:11px;border-radius:50%;background:#808080"></div>
<div class="a t" style="left:588px;top:472px;line-height:14px;font-size:11px">c</div>
<div class="a" style="left:595px;top:473px;width:11px;height:11px;border-radius:50%;background:#808080"></div>
</body></html>
